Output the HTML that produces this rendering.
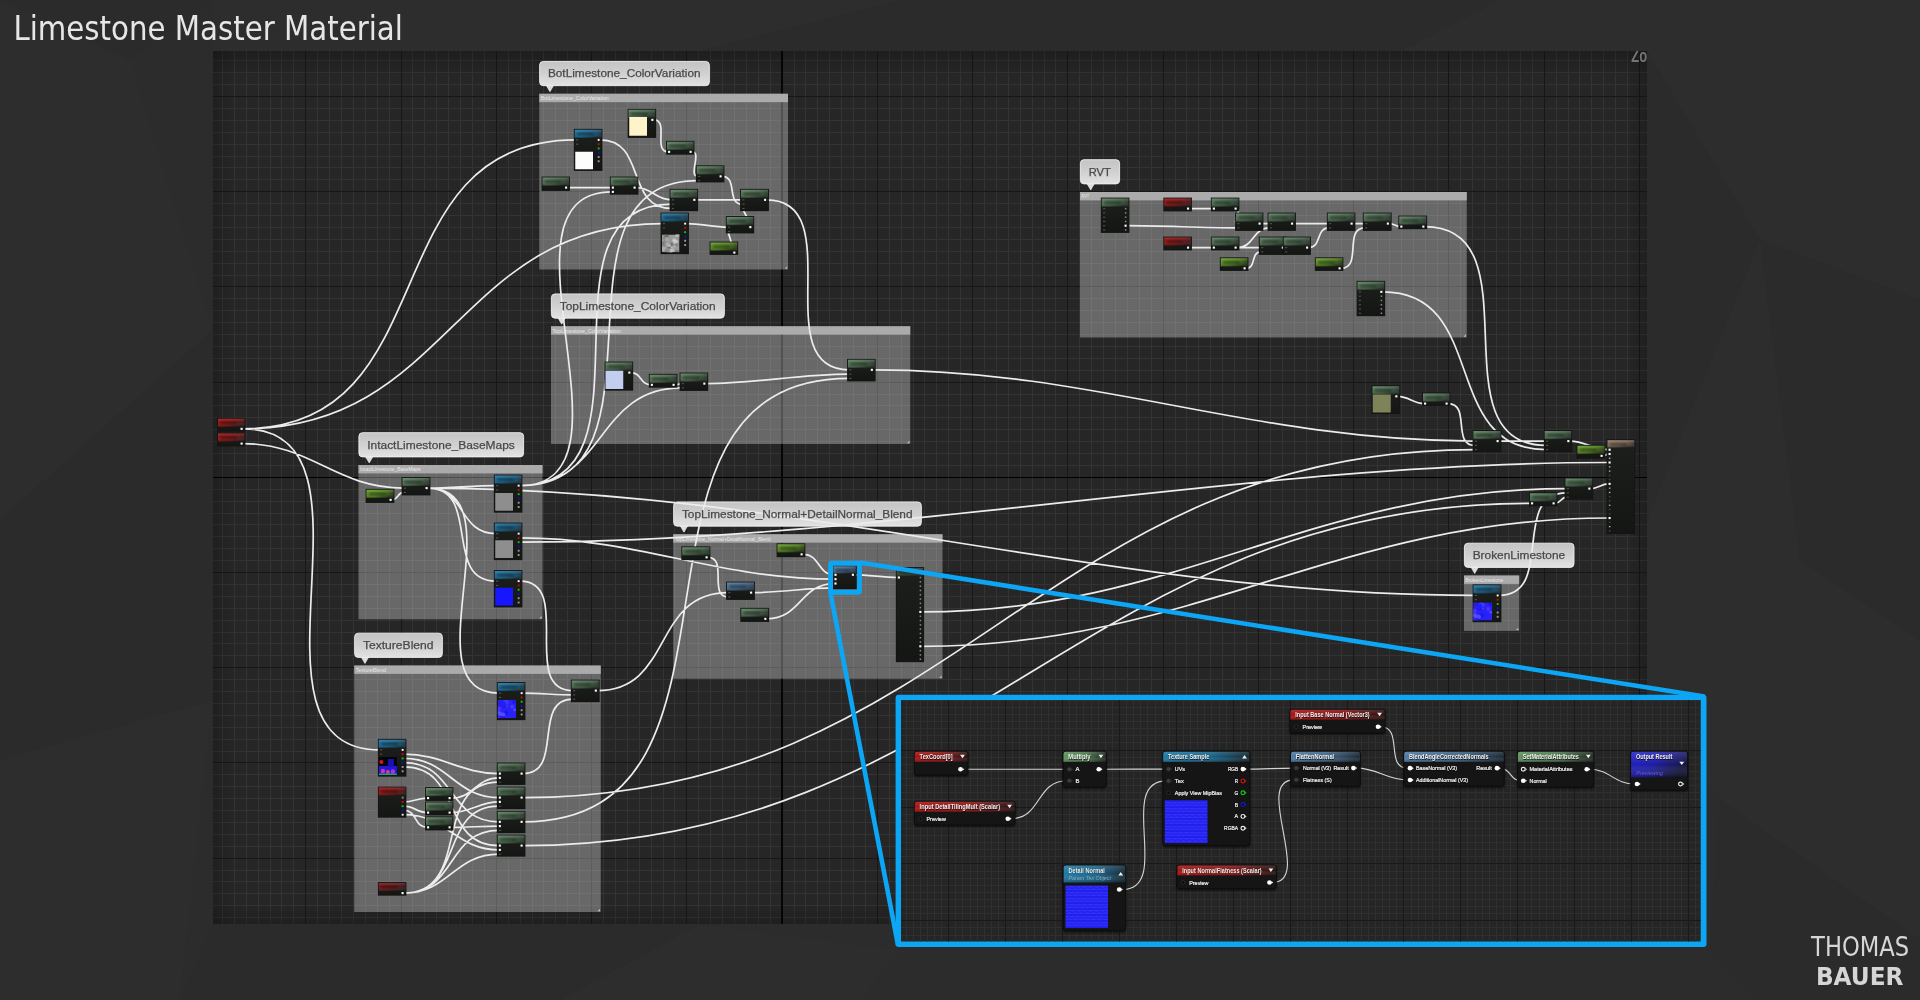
<!DOCTYPE html>
<html lang="en"><head><meta charset="utf-8"><title>Limestone Master Material</title>
<style>html,body{margin:0;padding:0;background:#2c2c2c;overflow:hidden}svg{display:block}</style></head>
<body>
<svg width="1920" height="1000" viewBox="0 0 1920 1000">
<defs>
<linearGradient id="bub" x1="0" y1="0" x2="0" y2="1"><stop offset="0" stop-color="#c4c4c4"/><stop offset="0.5" stop-color="#d0d0d0"/><stop offset="1" stop-color="#e2e2e2"/></linearGradient>
<linearGradient id="hG" x1="0" y1="0" x2="1" y2="0.6"><stop offset="0" stop-color="#587c5a"/><stop offset="0.6" stop-color="#425f45"/><stop offset="1" stop-color="#263328"/></linearGradient>
<linearGradient id="hL" x1="0" y1="0" x2="1" y2="0.6"><stop offset="0" stop-color="#649a2a"/><stop offset="0.6" stop-color="#4c7a1a"/><stop offset="1" stop-color="#263614"/></linearGradient>
<linearGradient id="hR" x1="0" y1="0" x2="1" y2="0.6"><stop offset="0" stop-color="#9a1010"/><stop offset="0.6" stop-color="#7a1111"/><stop offset="1" stop-color="#351717"/></linearGradient>
<linearGradient id="hB" x1="0" y1="0" x2="1" y2="0.6"><stop offset="0" stop-color="#1b74a2"/><stop offset="0.6" stop-color="#165b82"/><stop offset="1" stop-color="#183442"/></linearGradient>
<linearGradient id="hS" x1="0" y1="0" x2="1" y2="0.6"><stop offset="0" stop-color="#4f7699"/><stop offset="0.6" stop-color="#3f6080"/><stop offset="1" stop-color="#28394a"/></linearGradient>
<linearGradient id="hO" x1="0" y1="0" x2="1" y2="0.6"><stop offset="0" stop-color="#8f7663"/><stop offset="0.6" stop-color="#7a6454"/><stop offset="1" stop-color="#3a322c"/></linearGradient>
<linearGradient id="hD" x1="0" y1="0" x2="1" y2="0.6"><stop offset="0" stop-color="#3d4f35"/><stop offset="1" stop-color="#262b24"/></linearGradient>
<linearGradient id="gloss" x1="0" y1="0" x2="0" y2="1"><stop offset="0" stop-color="#fff" stop-opacity="0.12"/><stop offset="0.45" stop-color="#fff" stop-opacity="0.02"/><stop offset="1" stop-color="#000" stop-opacity="0.25"/></linearGradient>
<linearGradient id="body" x1="0" y1="0" x2="0" y2="1"><stop offset="0" stop-color="#1c1f1c"/><stop offset="1" stop-color="#141614"/></linearGradient>
<linearGradient id="vT" x1="0" y1="0" x2="0" y2="1"><stop offset="0" stop-color="#000" stop-opacity="0.22"/><stop offset="1" stop-color="#000" stop-opacity="0"/></linearGradient>
<linearGradient id="vB" x1="0" y1="1" x2="0" y2="0"><stop offset="0" stop-color="#000" stop-opacity="0.18"/><stop offset="1" stop-color="#000" stop-opacity="0"/></linearGradient>
<linearGradient id="vL" x1="0" y1="0" x2="1" y2="0"><stop offset="0" stop-color="#000" stop-opacity="0.18"/><stop offset="1" stop-color="#000" stop-opacity="0"/></linearGradient>
<linearGradient id="vR" x1="1" y1="0" x2="0" y2="0"><stop offset="0" stop-color="#000" stop-opacity="0.18"/><stop offset="1" stop-color="#000" stop-opacity="0"/></linearGradient>
<clipPath id="gridclip"><rect x="213" y="51" width="1434" height="873"/></clipPath>
<clipPath id="insetclip"><rect x="898" y="697" width="806" height="247"/></clipPath>
<filter id="blur1" x="-10%" y="-10%" width="120%" height="120%"><feGaussianBlur stdDeviation="0.8"/></filter>
</defs>
<rect width="1920" height="1000" fill="#2c2c2c"/>
<polygon points="0,0 130,60 0,230" fill="#2d2d2d"/>
<polygon points="130,60 213,0 0,0" fill="#2b2b2b"/>
<polygon points="0,230 130,60 213,330 0,520" fill="#2d2d2d"/>
<polygon points="0,520 213,330 213,700 0,760" fill="#2b2b2b"/>
<polygon points="0,760 213,700 180,1000 0,1000" fill="#2d2d2d"/>
<polygon points="180,1000 213,924 700,924 560,1000" fill="#2b2b2b"/>
<polygon points="560,1000 700,924 900,950 860,1000" fill="#2d2d2d"/>
<polygon points="1647,51 1920,0 1920,300 1760,240" fill="#2d2d2d"/>
<polygon points="1647,51 1760,240 1647,520" fill="#2b2b2b"/>
<polygon points="1760,240 1920,300 1920,640 1800,560" fill="#2b2b2b"/>
<polygon points="1647,520 1760,240 1800,560 1720,800 1647,700" fill="#2d2d2d"/>
<polygon points="1720,800 1800,560 1920,640 1920,940" fill="#2d2d2d"/>
<polygon points="1710,950 1720,800 1920,940 1920,1000 1760,1000" fill="#2b2b2b"/>
<polygon points="213,0 900,0 700,51 213,51" fill="#2d2d2d"/>
<polygon points="900,0 1500,0 1400,51 700,51" fill="#2b2b2b"/>
<polygon points="1500,0 1920,0 1647,51 1400,51" fill="#2d2d2d"/>
<rect x="213" y="51" width="1434" height="873" fill="#262626"/>
<g clip-path="url(#gridclip)" shape-rendering="crispEdges">
<path d="M222.45 51V924M234.36 51V924M246.26 51V924M258.17 51V924M270.08 51V924M281.99 51V924M293.89 51V924M305.80 51V924M317.71 51V924M329.62 51V924M341.52 51V924M353.43 51V924M365.34 51V924M377.25 51V924M389.15 51V924M401.06 51V924M412.97 51V924M424.88 51V924M436.78 51V924M448.69 51V924M460.60 51V924M472.51 51V924M484.41 51V924M496.32 51V924M508.23 51V924M520.14 51V924M532.04 51V924M543.95 51V924M555.86 51V924M567.77 51V924M579.67 51V924M591.58 51V924M603.49 51V924M615.40 51V924M627.30 51V924M639.21 51V924M651.12 51V924M663.03 51V924M674.93 51V924M686.84 51V924M698.75 51V924M710.66 51V924M722.56 51V924M734.47 51V924M746.38 51V924M758.29 51V924M770.19 51V924M782.10 51V924M794.01 51V924M805.92 51V924M817.82 51V924M829.73 51V924M841.64 51V924M853.55 51V924M865.45 51V924M877.36 51V924M889.27 51V924M901.18 51V924M913.08 51V924M924.99 51V924M936.90 51V924M948.81 51V924M960.71 51V924M972.62 51V924M984.53 51V924M996.44 51V924M1008.34 51V924M1020.25 51V924M1032.16 51V924M1044.07 51V924M1055.97 51V924M1067.88 51V924M1079.79 51V924M1091.70 51V924M1103.60 51V924M1115.51 51V924M1127.42 51V924M1139.33 51V924M1151.23 51V924M1163.14 51V924M1175.05 51V924M1186.96 51V924M1198.86 51V924M1210.77 51V924M1222.68 51V924M1234.59 51V924M1246.49 51V924M1258.40 51V924M1270.31 51V924M1282.22 51V924M1294.12 51V924M1306.03 51V924M1317.94 51V924M1329.85 51V924M1341.75 51V924M1353.66 51V924M1365.57 51V924M1377.48 51V924M1389.38 51V924M1401.29 51V924M1413.20 51V924M1425.11 51V924M1437.01 51V924M1448.92 51V924M1460.83 51V924M1472.74 51V924M1484.64 51V924M1496.55 51V924M1508.46 51V924M1520.37 51V924M1532.27 51V924M1544.18 51V924M1556.09 51V924M1568.00 51V924M1579.90 51V924M1591.81 51V924M1603.72 51V924M1615.63 51V924M1627.53 51V924M1639.44 51V924M213 60.80H1647M213 72.70H1647M213 84.60H1647M213 96.50H1647M213 108.40H1647M213 120.30H1647M213 132.20H1647M213 144.10H1647M213 156.00H1647M213 167.90H1647M213 179.80H1647M213 191.70H1647M213 203.60H1647M213 215.50H1647M213 227.40H1647M213 239.30H1647M213 251.20H1647M213 263.10H1647M213 275.00H1647M213 286.90H1647M213 298.80H1647M213 310.70H1647M213 322.60H1647M213 334.50H1647M213 346.40H1647M213 358.30H1647M213 370.20H1647M213 382.10H1647M213 394.00H1647M213 405.90H1647M213 417.80H1647M213 429.70H1647M213 441.60H1647M213 453.50H1647M213 465.40H1647M213 477.30H1647M213 489.20H1647M213 501.10H1647M213 513.00H1647M213 524.90H1647M213 536.80H1647M213 548.70H1647M213 560.60H1647M213 572.50H1647M213 584.40H1647M213 596.30H1647M213 608.20H1647M213 620.10H1647M213 632.00H1647M213 643.90H1647M213 655.80H1647M213 667.70H1647M213 679.60H1647M213 691.50H1647M213 703.40H1647M213 715.30H1647M213 727.20H1647M213 739.10H1647M213 751.00H1647M213 762.90H1647M213 774.80H1647M213 786.70H1647M213 798.60H1647M213 810.50H1647M213 822.40H1647M213 834.30H1647M213 846.20H1647M213 858.10H1647M213 870.00H1647M213 881.90H1647M213 893.80H1647M213 905.70H1647M213 917.60H1647" stroke="#333333" stroke-width="1" fill="none"/>
<path d="M305.80 51V924M401.06 51V924M496.32 51V924M591.58 51V924M686.84 51V924M782.10 51V924M877.36 51V924M972.62 51V924M1067.88 51V924M1163.14 51V924M1258.40 51V924M1353.66 51V924M1448.92 51V924M1544.18 51V924M1639.44 51V924M213 96.50H1647M213 191.70H1647M213 286.90H1647M213 382.10H1647M213 477.30H1647M213 572.50H1647M213 667.70H1647M213 762.90H1647M213 858.10H1647" stroke="#171717" stroke-width="1" fill="none"/>
<path d="M213 477.3H1647" stroke="#000" stroke-width="1.3" fill="none"/>
<path d="M782 51V924" stroke="#050505" stroke-width="2" fill="none"/>
</g>
<rect x="213" y="51" width="1434" height="26" fill="url(#vT)"/>
<rect x="213" y="902" width="1434" height="22" fill="url(#vB)"/>
<rect x="213" y="51" width="22" height="873" fill="url(#vL)"/>
<rect x="1625" y="51" width="22" height="873" fill="url(#vR)"/>
<g clip-path="url(#gridclip)" opacity="0.999"><text transform="translate(1631.3 62.2) scale(0.69 1)" font-family="Liberation Sans, sans-serif" font-size="18.8" font-weight="bold" fill="#747474">Zoom</text></g>
<g>
<rect x="539.25" y="93.75" width="248.75" height="175.75" fill="#fff" fill-opacity="0.305"/>
<rect x="539.25" y="93.75" width="248.75" height="8.4" fill="#ababab"/>
<text x="540.75" y="100.05" font-family="Liberation Sans, sans-serif" font-size="4.6" fill="#fff" fill-opacity="0.75" textLength="68.04" lengthAdjust="spacingAndGlyphs">BotLimestone_ColorVariation</text>
<path d="M787.2 266.3L784.8 268.7H787.2Z" fill="#d8d8d8" fill-opacity="0.8"/>
<rect x="1080" y="192" width="386.75" height="145.5" fill="#fff" fill-opacity="0.305"/>
<rect x="1080" y="192" width="386.75" height="8.4" fill="#ababab"/>
<text x="1081.5" y="198.3" font-family="Liberation Sans, sans-serif" font-size="4.6" fill="#fff" fill-opacity="0.75" textLength="7.56" lengthAdjust="spacingAndGlyphs">RVT</text>
<path d="M1465.95 334.3L1463.55 336.7H1465.95Z" fill="#d8d8d8" fill-opacity="0.8"/>
<rect x="551" y="326.25" width="359.25" height="117.75" fill="#fff" fill-opacity="0.305"/>
<rect x="551" y="326.25" width="359.25" height="8.4" fill="#ababab"/>
<text x="552.5" y="332.55" font-family="Liberation Sans, sans-serif" font-size="4.6" fill="#fff" fill-opacity="0.75" textLength="68.04" lengthAdjust="spacingAndGlyphs">TopLimestone_ColorVariation</text>
<path d="M909.45 440.8L907.05 443.2H909.45Z" fill="#d8d8d8" fill-opacity="0.8"/>
<rect x="358.5" y="465" width="184" height="154.25" fill="#fff" fill-opacity="0.305"/>
<rect x="358.5" y="465" width="184" height="8.4" fill="#ababab"/>
<text x="360" y="471.3" font-family="Liberation Sans, sans-serif" font-size="4.6" fill="#fff" fill-opacity="0.75" textLength="60.48" lengthAdjust="spacingAndGlyphs">IntactLimestone_BaseMaps</text>
<path d="M541.7 616.05L539.3 618.45H541.7Z" fill="#d8d8d8" fill-opacity="0.8"/>
<rect x="673.25" y="534.25" width="269.25" height="144.5" fill="#fff" fill-opacity="0.305"/>
<rect x="673.25" y="534.25" width="269.25" height="8.4" fill="#ababab"/>
<text x="674.75" y="540.55" font-family="Liberation Sans, sans-serif" font-size="4.6" fill="#fff" fill-opacity="0.75" textLength="95.76" lengthAdjust="spacingAndGlyphs">TopLimestone_Normal+DetailNormal_Blend</text>
<path d="M941.7 675.55L939.3 677.95H941.7Z" fill="#d8d8d8" fill-opacity="0.8"/>
<rect x="354.25" y="665.5" width="246.5" height="246.5" fill="#fff" fill-opacity="0.305"/>
<rect x="354.25" y="665.5" width="246.5" height="8.4" fill="#ababab"/>
<text x="355.75" y="671.8" font-family="Liberation Sans, sans-serif" font-size="4.6" fill="#fff" fill-opacity="0.75" textLength="30.24" lengthAdjust="spacingAndGlyphs">TextureBlend</text>
<path d="M599.95 908.8L597.55 911.2H599.95Z" fill="#d8d8d8" fill-opacity="0.8"/>
<rect x="1464" y="575.5" width="55.2" height="55.4" fill="#fff" fill-opacity="0.305"/>
<rect x="1464" y="575.5" width="55.2" height="8.4" fill="#ababab"/>
<text x="1465.5" y="581.8" font-family="Liberation Sans, sans-serif" font-size="4.6" fill="#fff" fill-opacity="0.75" textLength="37.8" lengthAdjust="spacingAndGlyphs">BrokenLimestone</text>
<path d="M1518.4 627.7L1516 630.1H1518.4Z" fill="#d8d8d8" fill-opacity="0.8"/>
</g>
<g>
<path d="M546.35 85.55L549.95 91.65L553.55 85.55Z" fill="#dcdcdc" stroke="#efefef" stroke-width="0.7"/>
<rect x="539.65" y="61.45" width="169.7" height="24.2" rx="3.6" fill="url(#bub)" stroke="#efefef" stroke-width="0.9"/>
<path d="M1087.1 183.8L1090.7 189.9L1094.3 183.8Z" fill="#dcdcdc" stroke="#efefef" stroke-width="0.7"/>
<rect x="1080.4" y="159.7" width="39.2" height="24.2" rx="3.6" fill="url(#bub)" stroke="#efefef" stroke-width="0.9"/>
<path d="M558.1 318.05L561.7 324.15L565.3 318.05Z" fill="#dcdcdc" stroke="#efefef" stroke-width="0.7"/>
<rect x="551.4" y="293.95" width="172.95" height="24.2" rx="3.6" fill="url(#bub)" stroke="#efefef" stroke-width="0.9"/>
<path d="M365.6 456.8L369.2 462.9L372.8 456.8Z" fill="#dcdcdc" stroke="#efefef" stroke-width="0.7"/>
<rect x="358.9" y="432.7" width="164.7" height="24.2" rx="3.6" fill="url(#bub)" stroke="#efefef" stroke-width="0.9"/>
<path d="M680.35 526.05L683.95 532.15L687.55 526.05Z" fill="#dcdcdc" stroke="#efefef" stroke-width="0.7"/>
<rect x="673.65" y="501.95" width="247.7" height="24.2" rx="3.6" fill="url(#bub)" stroke="#efefef" stroke-width="0.9"/>
<path d="M361.35 657.3L364.95 663.4L368.55 657.3Z" fill="#dcdcdc" stroke="#efefef" stroke-width="0.7"/>
<rect x="354.65" y="633.2" width="87.7" height="24.2" rx="3.6" fill="url(#bub)" stroke="#efefef" stroke-width="0.9"/>
<path d="M1471.1 567.3L1474.7 573.4L1478.3 567.3Z" fill="#dcdcdc" stroke="#efefef" stroke-width="0.7"/>
<rect x="1464.4" y="543.2" width="109.6" height="24.2" rx="3.6" fill="url(#bub)" stroke="#efefef" stroke-width="0.9"/>
</g>
<g clip-path="url(#gridclip)"><path d="M243.1 428.85C450.35 428.85 368.6 139.85 575.85 139.85M243.1 428.85C451.35 428.85 454.35 223.6 662.6 223.6M243.1 428.85C395.68 428.85 227.27 749.85 379.85 749.85M243.1 443.6C311.43 443.6 335.27 488.1 403.6 488.1M392.1 499.85C398.43 499.85 397.27 492.37 403.6 492.37M428.1 488.1C451.52 488.1 472.43 485.6 495.85 485.6M428.1 488.1C465.85 488.1 458.1 533.6 495.85 533.6M428.1 488.1C481.68 488.1 442.27 581.1 495.85 581.1M428.1 488.1C520.02 488.1 406.93 693.1 498.85 693.1M520.1 485.6C648.59 485.6 483.36 191.87 611.85 191.87M520.1 485.6C664.43 485.6 527.27 204.12 671.6 204.12M520.1 485.6C681.01 485.6 536.94 180.62 697.85 180.62M520.1 485.6C606.51 485.6 595.19 387.87 681.6 387.87M428.1 488.1C797.2 488.1 1105.5 595.4 1474.6 595.4M520.1 542.14C879.98 542.14 1248.72 462.51 1608.6 462.51M520.1 537.87C638.67 537.87 715.93 579.17 834.5 579.17M520.1 581.1C574.18 581.1 518.77 690.6 572.85 690.6M653.85 119.85C669.27 119.85 652.68 151.85 668.1 151.85M692.1 151.85C702.18 151.85 687.77 176.35 697.85 176.35M722.1 176.35C738.02 176.35 726.18 204.12 742.1 204.12M567.6 187.6C582.35 187.6 597.1 187.6 611.85 187.6M636.1 187.6C652.02 187.6 655.68 199.85 671.6 199.85M600.1 139.85C646.78 139.85 624.92 208.39 671.6 208.39M695.85 199.85C711.27 199.85 726.68 199.85 742.1 199.85M686.6 223.6C701.52 223.6 712.93 227.1 727.85 227.1M766.6 199.85C850.77 199.85 764.93 369.85 849.1 369.85M630.85 372.6C641.6 372.6 640.1 384.85 650.85 384.85M675.1 384.85C677.68 384.85 679.02 383.6 681.6 383.6M705.85 383.6C756.76 383.6 798.19 374.12 849.1 374.12M523.1 821.85C779.59 821.85 592.61 378.39 849.1 378.39M873.35 369.85C1097.52 369.85 1250.43 441.1 1474.6 441.1M1127.1 225.68C1164.5 225.68 1199.7 227.87 1237.1 227.87M1189.6 208.6C1197.35 208.6 1205.1 208.6 1212.85 208.6M1237.1 208.6C1242.1 208.6 1232.1 223.6 1237.1 223.6M1261.1 223.6C1263.93 223.6 1266.77 223.6 1269.6 223.6M1293.6 223.6C1305.35 223.6 1317.1 223.6 1328.85 223.6M1353.1 223.6C1357.02 223.6 1360.93 223.6 1364.85 223.6M1389.35 223.6C1394.02 223.6 1395.68 226.6 1400.35 226.6M1189.6 247.6C1197.35 247.6 1205.1 247.6 1212.85 247.6M1237.1 247.6C1254.51 247.6 1252.19 227.87 1269.6 227.87M1237.1 247.6C1245.02 247.6 1252.93 247.6 1260.85 247.6M1246.1 268.35C1256.51 268.35 1250.44 251.87 1260.85 251.87M1284.35 247.6C1284.52 247.6 1284.68 247.6 1284.85 247.6M1308.6 247.6C1321.93 247.6 1315.52 227.87 1328.85 227.87M1341.1 268.35C1362.51 268.35 1343.44 227.87 1364.85 227.87M1424.85 226.6C1538.11 226.6 1432.59 445.37 1545.85 445.37M1382.85 291.85C1489.78 291.85 1438.92 449.64 1545.85 449.64M1397.85 396.35C1409.02 396.35 1412.93 403.6 1424.1 403.6M1448.1 403.6C1470.86 403.6 1451.84 445.37 1474.6 445.37M1499.1 441.1C1514.68 441.1 1530.27 441.1 1545.85 441.1M1569.85 441.1C1585.63 441.1 1592.82 449.7 1608.6 449.7M1603.1 455.85C1605.56 455.85 1606.14 453.97 1608.6 453.97M1590.85 488.6C1598.35 488.6 1601.1 483.86 1608.6 483.86M1555.1 503.35C1561 503.35 1560.7 497.14 1566.6 497.14M1499.1 595.4C1555.78 595.4 1509.92 492.87 1566.6 492.87M921.85 611.9C1177.87 611.9 1310.58 488.6 1566.6 488.6M921.85 646.3C1193.53 646.3 1336.92 518.02 1608.6 518.02M708.1 557.35C727.94 557.35 708.26 596.87 728.1 596.87M803.1 554.35C820.38 554.35 817.22 574.8 834.5 574.8M752.6 592.6C781.46 592.6 805.64 587.91 834.5 587.91M766.85 618.85C801.17 618.85 800.18 583.54 834.5 583.54M854.4 574.8C869.78 574.8 882.47 577.5 897.85 577.5M523.1 693.1C540.27 693.1 555.68 694.87 572.85 694.87M523.1 773.6C564.5 773.6 531.45 699.14 572.85 699.14M523.1 797.6C956.25 797.6 1041.45 449.64 1474.6 449.64M523.1 845.6C970.52 845.6 1083.68 503.35 1531.1 503.35M597.35 690.6C673.6 690.6 651.85 592.6 728.1 592.6M404.1 754.12C442.18 754.12 460.77 773.6 498.85 773.6M404.1 758.39C448.75 758.39 454.2 797.6 498.85 797.6M404.1 762.66C455.41 762.66 447.54 821.85 498.85 821.85M404.1 766.93C461.91 766.93 441.04 845.6 498.85 845.6M404.1 801.87C413.02 801.87 418.18 798.1 427.1 798.1M404.1 806.14C413.92 806.14 417.28 812.6 427.1 812.6M404.1 810.41C417.41 810.41 413.79 827.35 427.1 827.35M404.1 814.68C447.41 814.68 455.54 849.87 498.85 849.87M451.1 798.1C473.76 798.1 476.19 777.87 498.85 777.87M451.1 812.6C470.59 812.6 479.36 801.87 498.85 801.87M451.1 827.35C467.43 827.35 482.52 826.12 498.85 826.12M404.1 893.1C472.67 893.1 430.28 782.14 498.85 782.14M404.1 893.1C464.67 893.1 438.28 806.14 498.85 806.14M404.1 893.1C456.59 893.1 446.36 830.39 498.85 830.39M404.1 893.1C448.67 893.1 454.28 854.14 498.85 854.14M751.5 226.5L742.5 208.5M734.2 252.2L728 231.5" fill="none" stroke="#ececec" stroke-width="1.7" stroke-linecap="round"/></g>
<g clip-path="url(#gridclip)">
<rect x="627.6" y="108.85" width="28.55" height="29.05" fill="#121312"/><rect x="628.4" y="109.65" width="26.95" height="27.45" fill="url(#body)"/><rect x="628.5" y="109.75" width="26.75" height="8.1" fill="url(#hG)"/><rect x="628.5" y="109.75" width="26.75" height="8.1" fill="url(#gloss)"/><rect x="630.5" y="112.45" width="17.2" height="3" rx="1.5" fill="#000" fill-opacity="0.36" filter="url(#blur1)"/><rect x="629.25" y="117" width="17.75" height="18.75" fill="#fff3cc"/><rect x="651.3" y="118.8" width="2.1" height="2.1" fill="#fff"/>
<rect x="573.85" y="128.85" width="28.55" height="42.05" fill="#121312"/><rect x="574.65" y="129.65" width="26.95" height="40.45" fill="url(#body)"/><rect x="574.75" y="129.75" width="26.75" height="8.1" fill="url(#hB)"/><rect x="574.75" y="129.75" width="26.75" height="8.1" fill="url(#gloss)"/><rect x="576.75" y="132.45" width="17.2" height="3" rx="1.5" fill="#000" fill-opacity="0.36" filter="url(#blur1)"/><rect x="575.25" y="151.75" width="17.75" height="17.5" fill="#fdfdfd"/><rect x="597.7" y="138.95" width="1.9" height="1.9" fill="#fff"/><rect x="597.7" y="143.22" width="1.9" height="1.9" fill="#e00000"/><rect x="597.7" y="147.49" width="1.9" height="1.9" fill="#00d000"/><rect x="597.7" y="151.76" width="1.9" height="1.9" fill="#1010e0"/><rect x="597.7" y="156.03" width="1.9" height="1.9" fill="#999"/><rect x="597.7" y="160.3" width="1.9" height="1.9" fill="#999"/><rect x="576.05" y="139.35" width="2.2" height="1.1" fill="#50544f"/><rect x="576.05" y="143.62" width="2.2" height="1.1" fill="#50544f"/>
<rect x="666.1" y="140.85" width="28.3" height="13.8" fill="#121312"/><rect x="666.9" y="141.65" width="26.7" height="12.2" fill="url(#body)"/><rect x="667" y="141.75" width="26.5" height="8.1" fill="url(#hG)"/><rect x="667" y="141.75" width="26.5" height="8.1" fill="url(#gloss)"/><rect x="669" y="144.45" width="17.05" height="3" rx="1.5" fill="#000" fill-opacity="0.36" filter="url(#blur1)"/><rect x="689.55" y="150.8" width="2.1" height="2.1" fill="#fff"/><rect x="668.05" y="150.8" width="2.1" height="2.1" fill="#fff"/>
<rect x="695.85" y="165.35" width="28.55" height="17.05" fill="#121312"/><rect x="696.65" y="166.15" width="26.95" height="15.45" fill="url(#body)"/><rect x="696.75" y="166.25" width="26.75" height="8.1" fill="url(#hG)"/><rect x="696.75" y="166.25" width="26.75" height="8.1" fill="url(#gloss)"/><rect x="698.75" y="168.95" width="17.2" height="3" rx="1.5" fill="#000" fill-opacity="0.36" filter="url(#blur1)"/><rect x="719.55" y="175.3" width="2.1" height="2.1" fill="#fff"/><rect x="698.05" y="175.85" width="2.2" height="1.1" fill="#50544f"/><rect x="698.05" y="180.12" width="2.2" height="1.1" fill="#50544f"/>
<rect x="541.6" y="176.6" width="28.3" height="14.3" fill="#121312"/><rect x="542.4" y="177.4" width="26.7" height="12.7" fill="url(#body)"/><rect x="542.5" y="177.5" width="26.5" height="8.1" fill="url(#hG)"/><rect x="542.5" y="177.5" width="26.5" height="8.1" fill="url(#gloss)"/><rect x="544.5" y="180.2" width="17.05" height="3" rx="1.5" fill="#000" fill-opacity="0.36" filter="url(#blur1)"/><rect x="565.05" y="186.55" width="2.1" height="2.1" fill="#fff"/>
<rect x="609.85" y="176.6" width="28.55" height="18.05" fill="#121312"/><rect x="610.65" y="177.4" width="26.95" height="16.45" fill="url(#body)"/><rect x="610.75" y="177.5" width="26.75" height="8.1" fill="url(#hG)"/><rect x="610.75" y="177.5" width="26.75" height="8.1" fill="url(#gloss)"/><rect x="612.75" y="180.2" width="17.2" height="3" rx="1.5" fill="#000" fill-opacity="0.36" filter="url(#blur1)"/><rect x="633.55" y="186.55" width="2.1" height="2.1" fill="#fff"/><rect x="611.8" y="186.55" width="2.1" height="2.1" fill="#fff"/><rect x="611.8" y="190.82" width="2.1" height="2.1" fill="#fff"/>
<rect x="669.6" y="188.85" width="28.55" height="22.3" fill="#121312"/><rect x="670.4" y="189.65" width="26.95" height="20.7" fill="url(#body)"/><rect x="670.5" y="189.75" width="26.75" height="8.1" fill="url(#hG)"/><rect x="670.5" y="189.75" width="26.75" height="8.1" fill="url(#gloss)"/><rect x="672.5" y="192.45" width="17.2" height="3" rx="1.5" fill="#000" fill-opacity="0.36" filter="url(#blur1)"/><rect x="693.3" y="198.8" width="2.1" height="2.1" fill="#fff"/><rect x="671.8" y="199.35" width="2.2" height="1.1" fill="#50544f"/><rect x="671.8" y="203.62" width="2.2" height="1.1" fill="#50544f"/><rect x="671.8" y="207.89" width="2.2" height="1.1" fill="#50544f"/>
<rect x="740.1" y="188.85" width="28.8" height="22.3" fill="#121312"/><rect x="740.9" y="189.65" width="27.2" height="20.7" fill="url(#body)"/><rect x="741" y="189.75" width="27" height="8.1" fill="url(#hG)"/><rect x="741" y="189.75" width="27" height="8.1" fill="url(#gloss)"/><rect x="743" y="192.45" width="17.36" height="3" rx="1.5" fill="#000" fill-opacity="0.36" filter="url(#blur1)"/><rect x="764.05" y="198.8" width="2.1" height="2.1" fill="#fff"/><rect x="742.3" y="199.35" width="2.2" height="1.1" fill="#50544f"/><rect x="742.3" y="203.62" width="2.2" height="1.1" fill="#50544f"/><rect x="742.3" y="207.89" width="2.2" height="1.1" fill="#50544f"/>
<rect x="660.6" y="212.6" width="28.3" height="41.55" fill="#121312"/><rect x="661.4" y="213.4" width="26.7" height="39.95" fill="url(#body)"/><rect x="661.5" y="213.5" width="26.5" height="8.1" fill="url(#hB)"/><rect x="661.5" y="213.5" width="26.5" height="8.1" fill="url(#gloss)"/><rect x="663.5" y="216.2" width="17.05" height="3" rx="1.5" fill="#000" fill-opacity="0.36" filter="url(#blur1)"/><svg x="662" y="234.5" width="17.5" height="17.75" viewBox="662 234.5 17.5 17.75"><rect x="662" y="234.5" width="17.5" height="17.75" fill="#9a9a9a"/><circle cx="666.16" cy="244.16" r="1.61" fill="#d6d6d6" fill-opacity="0.7"/><circle cx="670.3" cy="244.81" r="2.13" fill="#808080" fill-opacity="0.7"/><circle cx="666.54" cy="238.66" r="2.99" fill="#808080" fill-opacity="0.7"/><circle cx="671.47" cy="244.26" r="1.67" fill="#6e6e6e" fill-opacity="0.7"/><circle cx="666.06" cy="237.19" r="2.84" fill="#808080" fill-opacity="0.7"/><circle cx="674.97" cy="246.42" r="0.94" fill="#d6d6d6" fill-opacity="0.7"/><circle cx="662.75" cy="248.35" r="2.61" fill="#b4b4b4" fill-opacity="0.7"/><circle cx="670.27" cy="247.26" r="2.73" fill="#5c5c5c" fill-opacity="0.7"/><circle cx="675.79" cy="242.08" r="2.4" fill="#d6d6d6" fill-opacity="0.7"/><circle cx="669.78" cy="251.11" r="2.73" fill="#c8c8c8" fill-opacity="0.7"/><circle cx="662.63" cy="243.28" r="1.37" fill="#5c5c5c" fill-opacity="0.7"/><circle cx="669.63" cy="245.62" r="1.46" fill="#d6d6d6" fill-opacity="0.7"/><circle cx="676.59" cy="244.69" r="1.98" fill="#808080" fill-opacity="0.7"/><circle cx="672.22" cy="250.55" r="2.3" fill="#c8c8c8" fill-opacity="0.7"/><circle cx="676.99" cy="252.09" r="2.28" fill="#6e6e6e" fill-opacity="0.7"/><circle cx="674.23" cy="240.29" r="1.99" fill="#d6d6d6" fill-opacity="0.7"/><circle cx="671.96" cy="247.17" r="1.26" fill="#d6d6d6" fill-opacity="0.7"/><circle cx="666.67" cy="236.71" r="1.86" fill="#5c5c5c" fill-opacity="0.7"/><circle cx="679.32" cy="236.07" r="2.56" fill="#808080" fill-opacity="0.7"/><circle cx="677.7" cy="234.86" r="1.74" fill="#808080" fill-opacity="0.7"/><circle cx="677.27" cy="235.28" r="2.15" fill="#c8c8c8" fill-opacity="0.7"/><circle cx="668.61" cy="244.91" r="2.01" fill="#b4b4b4" fill-opacity="0.7"/><circle cx="670.84" cy="252.22" r="1.48" fill="#c8c8c8" fill-opacity="0.7"/><circle cx="663.89" cy="244.01" r="2.89" fill="#808080" fill-opacity="0.7"/><circle cx="667.1" cy="239.17" r="2.32" fill="#b4b4b4" fill-opacity="0.7"/><circle cx="667.49" cy="251.52" r="2.77" fill="#808080" fill-opacity="0.7"/></svg><rect x="684.2" y="222.7" width="1.9" height="1.9" fill="#fff"/><rect x="684.2" y="226.97" width="1.9" height="1.9" fill="#e00000"/><rect x="684.2" y="231.24" width="1.9" height="1.9" fill="#00d000"/><rect x="684.2" y="235.51" width="1.9" height="1.9" fill="#1010e0"/><rect x="684.2" y="239.78" width="1.9" height="1.9" fill="#999"/><rect x="684.2" y="244.05" width="1.9" height="1.9" fill="#999"/><rect x="662.8" y="223.1" width="2.2" height="1.1" fill="#50544f"/><rect x="662.8" y="227.37" width="2.2" height="1.1" fill="#50544f"/>
<rect x="725.85" y="216.1" width="28.3" height="17.3" fill="#121312"/><rect x="726.65" y="216.9" width="26.7" height="15.7" fill="url(#body)"/><rect x="726.75" y="217" width="26.5" height="8.1" fill="url(#hG)"/><rect x="726.75" y="217" width="26.5" height="8.1" fill="url(#gloss)"/><rect x="728.75" y="219.7" width="17.05" height="3" rx="1.5" fill="#000" fill-opacity="0.36" filter="url(#blur1)"/><rect x="749.3" y="226.05" width="2.1" height="2.1" fill="#fff"/><rect x="728.05" y="226.6" width="2.2" height="1.1" fill="#50544f"/><rect x="728.05" y="230.87" width="2.2" height="1.1" fill="#50544f"/>
<rect x="709.6" y="241.6" width="28.55" height="13.3" fill="#121312"/><rect x="710.4" y="242.4" width="26.95" height="11.7" fill="url(#body)"/><rect x="710.5" y="242.5" width="26.75" height="8.1" fill="url(#hL)"/><rect x="710.5" y="242.5" width="26.75" height="8.1" fill="url(#gloss)"/><rect x="712.5" y="245.2" width="17.2" height="3" rx="1.5" fill="#000" fill-opacity="0.36" filter="url(#blur1)"/><rect x="733.3" y="251.55" width="2.1" height="2.1" fill="#fff"/>
<rect x="1100.85" y="197.6" width="28.55" height="35.3" fill="#121312"/><rect x="1101.65" y="198.4" width="26.95" height="33.7" fill="url(#body)"/><rect x="1101.75" y="198.5" width="26.75" height="8.1" fill="url(#hG)"/><rect x="1101.75" y="198.5" width="26.75" height="8.1" fill="url(#gloss)"/><rect x="1103.75" y="201.2" width="17.2" height="3" rx="1.5" fill="#000" fill-opacity="0.36" filter="url(#blur1)"/><rect x="1124.9" y="207.9" width="1.5" height="1.5" fill="#8a8a8a"/><rect x="1124.9" y="212.17" width="1.5" height="1.5" fill="#8a8a8a"/><rect x="1124.9" y="216.44" width="1.5" height="1.5" fill="#8a8a8a"/><rect x="1124.9" y="220.71" width="1.5" height="1.5" fill="#8a8a8a"/><rect x="1124.55" y="224.63" width="2.1" height="2.1" fill="#fff"/><rect x="1124.9" y="229.25" width="1.5" height="1.5" fill="#8a8a8a"/><rect x="1103.05" y="208.1" width="2.2" height="1.1" fill="#50544f"/><rect x="1103.05" y="212.37" width="2.2" height="1.1" fill="#50544f"/><rect x="1103.05" y="216.64" width="2.2" height="1.1" fill="#50544f"/><rect x="1103.05" y="220.91" width="2.2" height="1.1" fill="#50544f"/><rect x="1103.05" y="225.18" width="2.2" height="1.1" fill="#50544f"/><rect x="1103.05" y="229.45" width="2.2" height="1.1" fill="#50544f"/>
<rect x="1163.35" y="197.6" width="28.55" height="13.8" fill="#121312"/><rect x="1164.15" y="198.4" width="26.95" height="12.2" fill="url(#body)"/><rect x="1164.25" y="198.5" width="26.75" height="8.1" fill="url(#hR)"/><rect x="1164.25" y="198.5" width="26.75" height="8.1" fill="url(#gloss)"/><rect x="1166.25" y="201.2" width="17.2" height="3" rx="1.5" fill="#000" fill-opacity="0.36" filter="url(#blur1)"/><rect x="1187.05" y="207.55" width="2.1" height="2.1" fill="#fff"/>
<rect x="1210.85" y="197.6" width="28.55" height="13.8" fill="#121312"/><rect x="1211.65" y="198.4" width="26.95" height="12.2" fill="url(#body)"/><rect x="1211.75" y="198.5" width="26.75" height="8.1" fill="url(#hG)"/><rect x="1211.75" y="198.5" width="26.75" height="8.1" fill="url(#gloss)"/><rect x="1213.75" y="201.2" width="17.2" height="3" rx="1.5" fill="#000" fill-opacity="0.36" filter="url(#blur1)"/><rect x="1234.55" y="207.55" width="2.1" height="2.1" fill="#fff"/><rect x="1212.8" y="207.55" width="2.1" height="2.1" fill="#fff"/>
<rect x="1235.1" y="212.6" width="28.3" height="18.3" fill="#121312"/><rect x="1235.9" y="213.4" width="26.7" height="16.7" fill="url(#body)"/><rect x="1236" y="213.5" width="26.5" height="8.1" fill="url(#hG)"/><rect x="1236" y="213.5" width="26.5" height="8.1" fill="url(#gloss)"/><rect x="1238" y="216.2" width="17.05" height="3" rx="1.5" fill="#000" fill-opacity="0.36" filter="url(#blur1)"/><rect x="1258.55" y="222.55" width="2.1" height="2.1" fill="#fff"/><rect x="1237.3" y="223.1" width="2.2" height="1.1" fill="#50544f"/><rect x="1237.3" y="227.37" width="2.2" height="1.1" fill="#50544f"/>
<rect x="1267.6" y="212.6" width="28.3" height="18.3" fill="#121312"/><rect x="1268.4" y="213.4" width="26.7" height="16.7" fill="url(#body)"/><rect x="1268.5" y="213.5" width="26.5" height="8.1" fill="url(#hG)"/><rect x="1268.5" y="213.5" width="26.5" height="8.1" fill="url(#gloss)"/><rect x="1270.5" y="216.2" width="17.05" height="3" rx="1.5" fill="#000" fill-opacity="0.36" filter="url(#blur1)"/><rect x="1291.05" y="222.55" width="2.1" height="2.1" fill="#fff"/><rect x="1269.8" y="223.1" width="2.2" height="1.1" fill="#50544f"/><rect x="1269.8" y="227.37" width="2.2" height="1.1" fill="#50544f"/>
<rect x="1326.85" y="212.6" width="28.55" height="18.3" fill="#121312"/><rect x="1327.65" y="213.4" width="26.95" height="16.7" fill="url(#body)"/><rect x="1327.75" y="213.5" width="26.75" height="8.1" fill="url(#hG)"/><rect x="1327.75" y="213.5" width="26.75" height="8.1" fill="url(#gloss)"/><rect x="1329.75" y="216.2" width="17.2" height="3" rx="1.5" fill="#000" fill-opacity="0.36" filter="url(#blur1)"/><rect x="1350.55" y="222.55" width="2.1" height="2.1" fill="#fff"/><rect x="1329.05" y="223.1" width="2.2" height="1.1" fill="#50544f"/><rect x="1329.05" y="227.37" width="2.2" height="1.1" fill="#50544f"/>
<rect x="1362.85" y="212.6" width="28.8" height="18.3" fill="#121312"/><rect x="1363.65" y="213.4" width="27.2" height="16.7" fill="url(#body)"/><rect x="1363.75" y="213.5" width="27" height="8.1" fill="url(#hG)"/><rect x="1363.75" y="213.5" width="27" height="8.1" fill="url(#gloss)"/><rect x="1365.75" y="216.2" width="17.36" height="3" rx="1.5" fill="#000" fill-opacity="0.36" filter="url(#blur1)"/><rect x="1386.8" y="222.55" width="2.1" height="2.1" fill="#fff"/><rect x="1365.05" y="223.1" width="2.2" height="1.1" fill="#50544f"/><rect x="1365.05" y="227.37" width="2.2" height="1.1" fill="#50544f"/>
<rect x="1398.35" y="215.6" width="28.8" height="13.55" fill="#121312"/><rect x="1399.15" y="216.4" width="27.2" height="11.95" fill="url(#body)"/><rect x="1399.25" y="216.5" width="27" height="8.1" fill="url(#hG)"/><rect x="1399.25" y="216.5" width="27" height="8.1" fill="url(#gloss)"/><rect x="1401.25" y="219.2" width="17.36" height="3" rx="1.5" fill="#000" fill-opacity="0.36" filter="url(#blur1)"/><rect x="1422.3" y="225.55" width="2.1" height="2.1" fill="#fff"/><rect x="1400.3" y="225.55" width="2.1" height="2.1" fill="#fff"/>
<rect x="1163.35" y="236.6" width="28.55" height="13.8" fill="#121312"/><rect x="1164.15" y="237.4" width="26.95" height="12.2" fill="url(#body)"/><rect x="1164.25" y="237.5" width="26.75" height="8.1" fill="url(#hR)"/><rect x="1164.25" y="237.5" width="26.75" height="8.1" fill="url(#gloss)"/><rect x="1166.25" y="240.2" width="17.2" height="3" rx="1.5" fill="#000" fill-opacity="0.36" filter="url(#blur1)"/><rect x="1187.05" y="246.55" width="2.1" height="2.1" fill="#fff"/>
<rect x="1210.85" y="236.6" width="28.55" height="13.8" fill="#121312"/><rect x="1211.65" y="237.4" width="26.95" height="12.2" fill="url(#body)"/><rect x="1211.75" y="237.5" width="26.75" height="8.1" fill="url(#hG)"/><rect x="1211.75" y="237.5" width="26.75" height="8.1" fill="url(#gloss)"/><rect x="1213.75" y="240.2" width="17.2" height="3" rx="1.5" fill="#000" fill-opacity="0.36" filter="url(#blur1)"/><rect x="1234.55" y="246.55" width="2.1" height="2.1" fill="#fff"/><rect x="1212.8" y="246.55" width="2.1" height="2.1" fill="#fff"/>
<rect x="1258.85" y="236.6" width="27.8" height="18.3" fill="#121312"/><rect x="1259.65" y="237.4" width="26.2" height="16.7" fill="url(#body)"/><rect x="1259.75" y="237.5" width="26" height="8.1" fill="url(#hG)"/><rect x="1259.75" y="237.5" width="26" height="8.1" fill="url(#gloss)"/><rect x="1261.75" y="240.2" width="16.74" height="3" rx="1.5" fill="#000" fill-opacity="0.36" filter="url(#blur1)"/><rect x="1281.8" y="246.55" width="2.1" height="2.1" fill="#fff"/><rect x="1261.05" y="247.1" width="2.2" height="1.1" fill="#50544f"/><rect x="1261.05" y="251.37" width="2.2" height="1.1" fill="#50544f"/>
<rect x="1282.85" y="236.6" width="28.05" height="18.3" fill="#121312"/><rect x="1283.65" y="237.4" width="26.45" height="16.7" fill="url(#body)"/><rect x="1283.75" y="237.5" width="26.25" height="8.1" fill="url(#hG)"/><rect x="1283.75" y="237.5" width="26.25" height="8.1" fill="url(#gloss)"/><rect x="1285.75" y="240.2" width="16.89" height="3" rx="1.5" fill="#000" fill-opacity="0.36" filter="url(#blur1)"/><rect x="1306.05" y="246.55" width="2.1" height="2.1" fill="#fff"/><rect x="1285.05" y="247.1" width="2.2" height="1.1" fill="#50544f"/><rect x="1285.05" y="251.37" width="2.2" height="1.1" fill="#50544f"/>
<rect x="1219.85" y="257.35" width="28.55" height="13.55" fill="#121312"/><rect x="1220.65" y="258.15" width="26.95" height="11.95" fill="url(#body)"/><rect x="1220.75" y="258.25" width="26.75" height="8.1" fill="url(#hL)"/><rect x="1220.75" y="258.25" width="26.75" height="8.1" fill="url(#gloss)"/><rect x="1222.75" y="260.95" width="17.2" height="3" rx="1.5" fill="#000" fill-opacity="0.36" filter="url(#blur1)"/><rect x="1243.55" y="267.3" width="2.1" height="2.1" fill="#fff"/>
<rect x="1314.85" y="257.35" width="28.55" height="13.55" fill="#121312"/><rect x="1315.65" y="258.15" width="26.95" height="11.95" fill="url(#body)"/><rect x="1315.75" y="258.25" width="26.75" height="8.1" fill="url(#hL)"/><rect x="1315.75" y="258.25" width="26.75" height="8.1" fill="url(#gloss)"/><rect x="1317.75" y="260.95" width="17.2" height="3" rx="1.5" fill="#000" fill-opacity="0.36" filter="url(#blur1)"/><rect x="1338.55" y="267.3" width="2.1" height="2.1" fill="#fff"/>
<rect x="1356.6" y="280.85" width="28.55" height="35.3" fill="#121312"/><rect x="1357.4" y="281.65" width="26.95" height="33.7" fill="url(#body)"/><rect x="1357.5" y="281.75" width="26.75" height="8.1" fill="url(#hG)"/><rect x="1357.5" y="281.75" width="26.75" height="8.1" fill="url(#gloss)"/><rect x="1359.5" y="284.45" width="17.2" height="3" rx="1.5" fill="#000" fill-opacity="0.36" filter="url(#blur1)"/><rect x="1380.3" y="290.8" width="2.1" height="2.1" fill="#fff"/><rect x="1380.65" y="295.42" width="1.5" height="1.5" fill="#8a8a8a"/><rect x="1380.65" y="299.69" width="1.5" height="1.5" fill="#8a8a8a"/><rect x="1380.65" y="303.96" width="1.5" height="1.5" fill="#8a8a8a"/><rect x="1380.65" y="308.23" width="1.5" height="1.5" fill="#8a8a8a"/><rect x="1380.65" y="312.5" width="1.5" height="1.5" fill="#8a8a8a"/><rect x="1358.8" y="291.35" width="2.2" height="1.1" fill="#50544f"/><rect x="1358.8" y="295.62" width="2.2" height="1.1" fill="#50544f"/><rect x="1358.8" y="299.89" width="2.2" height="1.1" fill="#50544f"/><rect x="1358.8" y="304.16" width="2.2" height="1.1" fill="#50544f"/><rect x="1358.8" y="308.43" width="2.2" height="1.1" fill="#50544f"/><rect x="1358.8" y="312.7" width="2.2" height="1.1" fill="#50544f"/>
<rect x="604.6" y="361.6" width="28.55" height="29.05" fill="#121312"/><rect x="605.4" y="362.4" width="26.95" height="27.45" fill="url(#body)"/><rect x="605.5" y="362.5" width="26.75" height="8.1" fill="url(#hG)"/><rect x="605.5" y="362.5" width="26.75" height="8.1" fill="url(#gloss)"/><rect x="607.5" y="365.2" width="17.2" height="3" rx="1.5" fill="#000" fill-opacity="0.36" filter="url(#blur1)"/><rect x="605.5" y="370.75" width="17.75" height="18.25" fill="#c3cdf0"/><rect x="628.3" y="371.55" width="2.1" height="2.1" fill="#fff"/>
<rect x="648.85" y="373.85" width="28.55" height="13.8" fill="#121312"/><rect x="649.65" y="374.65" width="26.95" height="12.2" fill="url(#body)"/><rect x="649.75" y="374.75" width="26.75" height="8.1" fill="url(#hG)"/><rect x="649.75" y="374.75" width="26.75" height="8.1" fill="url(#gloss)"/><rect x="651.75" y="377.45" width="17.2" height="3" rx="1.5" fill="#000" fill-opacity="0.36" filter="url(#blur1)"/><rect x="672.55" y="383.8" width="2.1" height="2.1" fill="#fff"/><rect x="650.8" y="383.8" width="2.1" height="2.1" fill="#fff"/>
<rect x="679.6" y="372.6" width="28.55" height="18.3" fill="#121312"/><rect x="680.4" y="373.4" width="26.95" height="16.7" fill="url(#body)"/><rect x="680.5" y="373.5" width="26.75" height="8.1" fill="url(#hG)"/><rect x="680.5" y="373.5" width="26.75" height="8.1" fill="url(#gloss)"/><rect x="682.5" y="376.2" width="17.2" height="3" rx="1.5" fill="#000" fill-opacity="0.36" filter="url(#blur1)"/><rect x="703.3" y="382.55" width="2.1" height="2.1" fill="#fff"/><rect x="681.8" y="383.1" width="2.2" height="1.1" fill="#50544f"/><rect x="681.8" y="387.37" width="2.2" height="1.1" fill="#50544f"/>
<rect x="847.1" y="358.85" width="28.55" height="22.55" fill="#121312"/><rect x="847.9" y="359.65" width="26.95" height="20.95" fill="url(#body)"/><rect x="848" y="359.75" width="26.75" height="8.1" fill="url(#hG)"/><rect x="848" y="359.75" width="26.75" height="8.1" fill="url(#gloss)"/><rect x="850" y="362.45" width="17.2" height="3" rx="1.5" fill="#000" fill-opacity="0.36" filter="url(#blur1)"/><rect x="870.8" y="368.8" width="2.1" height="2.1" fill="#fff"/><rect x="849.3" y="369.35" width="2.2" height="1.1" fill="#50544f"/><rect x="849.3" y="373.62" width="2.2" height="1.1" fill="#50544f"/><rect x="849.3" y="377.89" width="2.2" height="1.1" fill="#50544f"/>
<rect x="217.1" y="417.85" width="28.3" height="13.8" fill="#121312"/><rect x="217.9" y="418.65" width="26.7" height="12.2" fill="url(#body)"/><rect x="218" y="418.75" width="26.5" height="8.1" fill="url(#hR)"/><rect x="218" y="418.75" width="26.5" height="8.1" fill="url(#gloss)"/><rect x="220" y="421.45" width="17.05" height="3" rx="1.5" fill="#000" fill-opacity="0.36" filter="url(#blur1)"/><rect x="240.55" y="427.8" width="2.1" height="2.1" fill="#fff"/>
<rect x="217.1" y="432.6" width="28.3" height="13.8" fill="#121312"/><rect x="217.9" y="433.4" width="26.7" height="12.2" fill="url(#body)"/><rect x="218" y="433.5" width="26.5" height="8.1" fill="url(#hR)"/><rect x="218" y="433.5" width="26.5" height="8.1" fill="url(#gloss)"/><rect x="220" y="436.2" width="17.05" height="3" rx="1.5" fill="#000" fill-opacity="0.36" filter="url(#blur1)"/><rect x="240.55" y="442.55" width="2.1" height="2.1" fill="#fff"/>
<rect x="365.6" y="488.85" width="28.8" height="14.05" fill="#121312"/><rect x="366.4" y="489.65" width="27.2" height="12.45" fill="url(#body)"/><rect x="366.5" y="489.75" width="27" height="8.1" fill="url(#hL)"/><rect x="366.5" y="489.75" width="27" height="8.1" fill="url(#gloss)"/><rect x="368.5" y="492.45" width="17.36" height="3" rx="1.5" fill="#000" fill-opacity="0.36" filter="url(#blur1)"/><rect x="389.55" y="498.8" width="2.1" height="2.1" fill="#fff"/>
<rect x="401.6" y="477.1" width="28.8" height="18.3" fill="#121312"/><rect x="402.4" y="477.9" width="27.2" height="16.7" fill="url(#body)"/><rect x="402.5" y="478" width="27" height="8.1" fill="url(#hG)"/><rect x="402.5" y="478" width="27" height="8.1" fill="url(#gloss)"/><rect x="404.5" y="480.7" width="17.36" height="3" rx="1.5" fill="#000" fill-opacity="0.36" filter="url(#blur1)"/><rect x="425.55" y="487.05" width="2.1" height="2.1" fill="#fff"/><rect x="403.8" y="487.6" width="2.2" height="1.1" fill="#50544f"/><rect x="403.8" y="491.87" width="2.2" height="1.1" fill="#50544f"/>
<rect x="493.85" y="474.6" width="28.55" height="38.05" fill="#121312"/><rect x="494.65" y="475.4" width="26.95" height="36.45" fill="url(#body)"/><rect x="494.75" y="475.5" width="26.75" height="8.1" fill="url(#hB)"/><rect x="494.75" y="475.5" width="26.75" height="8.1" fill="url(#gloss)"/><rect x="496.75" y="478.2" width="17.2" height="3" rx="1.5" fill="#000" fill-opacity="0.36" filter="url(#blur1)"/><rect x="495.25" y="493" width="17.75" height="17.75" fill="#8e8e8e"/><rect x="517.7" y="484.7" width="1.9" height="1.9" fill="#fff"/><rect x="517.7" y="488.97" width="1.9" height="1.9" fill="#e00000"/><rect x="517.7" y="493.24" width="1.9" height="1.9" fill="#00d000"/><rect x="517.7" y="497.51" width="1.9" height="1.9" fill="#1010e0"/><rect x="517.7" y="501.78" width="1.9" height="1.9" fill="#999"/><rect x="517.7" y="506.05" width="1.9" height="1.9" fill="#999"/><rect x="496.05" y="485.1" width="2.2" height="1.1" fill="#50544f"/><rect x="496.05" y="489.37" width="2.2" height="1.1" fill="#50544f"/>
<rect x="493.85" y="522.6" width="28.55" height="37.55" fill="#121312"/><rect x="494.65" y="523.4" width="26.95" height="35.95" fill="url(#body)"/><rect x="494.75" y="523.5" width="26.75" height="8.1" fill="url(#hB)"/><rect x="494.75" y="523.5" width="26.75" height="8.1" fill="url(#gloss)"/><rect x="496.75" y="526.2" width="17.2" height="3" rx="1.5" fill="#000" fill-opacity="0.36" filter="url(#blur1)"/><rect x="495.25" y="540.25" width="17.75" height="17.75" fill="#8e8e8e"/><rect x="517.7" y="532.7" width="1.9" height="1.9" fill="#fff"/><rect x="517.7" y="536.97" width="1.9" height="1.9" fill="#e00000"/><rect x="517.7" y="541.24" width="1.9" height="1.9" fill="#00d000"/><rect x="517.7" y="545.51" width="1.9" height="1.9" fill="#1010e0"/><rect x="517.7" y="549.78" width="1.9" height="1.9" fill="#999"/><rect x="517.7" y="554.05" width="1.9" height="1.9" fill="#999"/><rect x="496.05" y="533.1" width="2.2" height="1.1" fill="#50544f"/><rect x="496.05" y="537.37" width="2.2" height="1.1" fill="#50544f"/>
<rect x="493.85" y="570.1" width="28.55" height="37.3" fill="#121312"/><rect x="494.65" y="570.9" width="26.95" height="35.7" fill="url(#body)"/><rect x="494.75" y="571" width="26.75" height="8.1" fill="url(#hB)"/><rect x="494.75" y="571" width="26.75" height="8.1" fill="url(#gloss)"/><rect x="496.75" y="573.7" width="17.2" height="3" rx="1.5" fill="#000" fill-opacity="0.36" filter="url(#blur1)"/><rect x="495.25" y="587.75" width="17.75" height="17.75" fill="#1616ff"/><rect x="517.7" y="580.2" width="1.9" height="1.9" fill="#fff"/><rect x="517.7" y="584.47" width="1.9" height="1.9" fill="#e00000"/><rect x="517.7" y="588.74" width="1.9" height="1.9" fill="#00d000"/><rect x="517.7" y="593.01" width="1.9" height="1.9" fill="#1010e0"/><rect x="517.7" y="597.28" width="1.9" height="1.9" fill="#999"/><rect x="517.7" y="601.55" width="1.9" height="1.9" fill="#999"/><rect x="496.05" y="580.6" width="2.2" height="1.1" fill="#50544f"/><rect x="496.05" y="584.87" width="2.2" height="1.1" fill="#50544f"/>
<rect x="496.85" y="682.1" width="28.55" height="38.05" fill="#121312"/><rect x="497.65" y="682.9" width="26.95" height="36.45" fill="url(#body)"/><rect x="497.75" y="683" width="26.75" height="8.1" fill="url(#hB)"/><rect x="497.75" y="683" width="26.75" height="8.1" fill="url(#gloss)"/><rect x="499.75" y="685.7" width="17.2" height="3" rx="1.5" fill="#000" fill-opacity="0.36" filter="url(#blur1)"/><svg x="497.75" y="700" width="18.25" height="18.25" viewBox="497.75 700 18.25 18.25"><rect x="497.75" y="700" width="18.25" height="18.25" fill="#2b22f5"/><circle cx="509.12" cy="713.54" r="2.39" fill="#1c28ff" fill-opacity="0.8"/><circle cx="498.28" cy="708.5" r="2.69" fill="#4d3cff" fill-opacity="0.8"/><circle cx="514.19" cy="702.07" r="1.74" fill="#1a10e8" fill-opacity="0.8"/><circle cx="504.7" cy="701.86" r="1.3" fill="#1a10e8" fill-opacity="0.8"/><circle cx="505.2" cy="703.32" r="2.53" fill="#3a1ae0" fill-opacity="0.8"/><circle cx="500.66" cy="714.55" r="1.08" fill="#1c28ff" fill-opacity="0.8"/><circle cx="505.87" cy="702.41" r="2.74" fill="#4d3cff" fill-opacity="0.8"/><circle cx="501.57" cy="703.93" r="2.76" fill="#1a10e8" fill-opacity="0.8"/><circle cx="503.03" cy="717.55" r="1.88" fill="#1a10e8" fill-opacity="0.8"/><circle cx="501.07" cy="717.68" r="1.19" fill="#3a1ae0" fill-opacity="0.8"/><circle cx="503.2" cy="706.59" r="1.13" fill="#1a10e8" fill-opacity="0.8"/><circle cx="502.56" cy="706.06" r="2.43" fill="#1c28ff" fill-opacity="0.8"/><circle cx="497.81" cy="712.37" r="1.48" fill="#5a55ff" fill-opacity="0.8"/><circle cx="504.24" cy="705.59" r="2.19" fill="#1a10e8" fill-opacity="0.8"/><circle cx="506.53" cy="712.86" r="0.91" fill="#4d3cff" fill-opacity="0.8"/><circle cx="515.07" cy="706.53" r="1.61" fill="#1c28ff" fill-opacity="0.8"/><circle cx="512.13" cy="706.68" r="1.96" fill="#4d3cff" fill-opacity="0.8"/><circle cx="506.01" cy="712.92" r="2.05" fill="#1a10e8" fill-opacity="0.8"/><circle cx="499.92" cy="704.49" r="2.44" fill="#3a1ae0" fill-opacity="0.8"/><circle cx="504.03" cy="706.47" r="1.85" fill="#3a1ae0" fill-opacity="0.8"/><circle cx="499.72" cy="713.66" r="2.39" fill="#5a55ff" fill-opacity="0.8"/><circle cx="498.42" cy="717.26" r="0.98" fill="#5a55ff" fill-opacity="0.8"/><circle cx="507.11" cy="706.62" r="1.1" fill="#5a55ff" fill-opacity="0.8"/><circle cx="514.62" cy="709.95" r="1.42" fill="#5a55ff" fill-opacity="0.8"/><circle cx="503.34" cy="714.58" r="2.05" fill="#5a55ff" fill-opacity="0.8"/><circle cx="515.94" cy="702.95" r="0.9" fill="#1c28ff" fill-opacity="0.8"/><circle cx="507.49" cy="707.41" r="1.27" fill="#1c28ff" fill-opacity="0.8"/><circle cx="504.02" cy="704.57" r="2.1" fill="#1a10e8" fill-opacity="0.8"/><circle cx="498.77" cy="716.72" r="0.87" fill="#3a1ae0" fill-opacity="0.8"/><circle cx="503.85" cy="703.78" r="2.76" fill="#1c28ff" fill-opacity="0.8"/></svg><rect x="520.7" y="692.2" width="1.9" height="1.9" fill="#fff"/><rect x="520.7" y="696.47" width="1.9" height="1.9" fill="#e00000"/><rect x="520.7" y="700.74" width="1.9" height="1.9" fill="#00d000"/><rect x="520.7" y="705.01" width="1.9" height="1.9" fill="#1010e0"/><rect x="520.7" y="709.28" width="1.9" height="1.9" fill="#999"/><rect x="520.7" y="713.55" width="1.9" height="1.9" fill="#999"/><rect x="499.05" y="692.6" width="2.2" height="1.1" fill="#50544f"/><rect x="499.05" y="696.87" width="2.2" height="1.1" fill="#50544f"/>
<rect x="570.85" y="679.6" width="28.8" height="22.55" fill="#121312"/><rect x="571.65" y="680.4" width="27.2" height="20.95" fill="url(#body)"/><rect x="571.75" y="680.5" width="27" height="8.1" fill="url(#hG)"/><rect x="571.75" y="680.5" width="27" height="8.1" fill="url(#gloss)"/><rect x="573.75" y="683.2" width="17.36" height="3" rx="1.5" fill="#000" fill-opacity="0.36" filter="url(#blur1)"/><rect x="594.8" y="689.55" width="2.1" height="2.1" fill="#fff"/><rect x="573.05" y="690.1" width="2.2" height="1.1" fill="#50544f"/><rect x="573.05" y="694.37" width="2.2" height="1.1" fill="#50544f"/><rect x="573.05" y="698.64" width="2.2" height="1.1" fill="#50544f"/>
<rect x="377.85" y="738.85" width="28.55" height="37.8" fill="#121312"/><rect x="378.65" y="739.65" width="26.95" height="36.2" fill="url(#body)"/><rect x="378.75" y="739.75" width="26.75" height="8.1" fill="url(#hB)"/><rect x="378.75" y="739.75" width="26.75" height="8.1" fill="url(#gloss)"/><rect x="380.75" y="742.45" width="17.2" height="3" rx="1.5" fill="#000" fill-opacity="0.36" filter="url(#blur1)"/><svg x="378.75" y="757" width="18.25" height="18" viewBox="0 0 18 18"><rect width="18" height="18" fill="#05040c"/><rect x="0" y="9" width="18" height="9" fill="#2418d8"/><rect x="9" y="2" width="6" height="8" fill="#1a12b0"/><circle cx="2.5" cy="5" r="2" fill="#e01020"/><circle cx="4" cy="14" r="2.2" fill="#d030c0"/><circle cx="9" cy="15" r="2" fill="#e04070"/><circle cx="14" cy="14.5" r="2.2" fill="#b030e0"/><rect x="0" y="16.5" width="18" height="1.5" fill="#20a080"/></svg><rect x="401.7" y="748.95" width="1.9" height="1.9" fill="#fff"/><rect x="401.7" y="753.22" width="1.9" height="1.9" fill="#e00000"/><rect x="401.7" y="757.49" width="1.9" height="1.9" fill="#00d000"/><rect x="401.7" y="761.76" width="1.9" height="1.9" fill="#1010e0"/><rect x="401.7" y="766.03" width="1.9" height="1.9" fill="#999"/><rect x="401.7" y="770.3" width="1.9" height="1.9" fill="#999"/><rect x="380.05" y="749.35" width="2.2" height="1.1" fill="#50544f"/><rect x="380.05" y="753.62" width="2.2" height="1.1" fill="#50544f"/>
<rect x="377.85" y="786.6" width="28.55" height="31.05" fill="#121312"/><rect x="378.65" y="787.4" width="26.95" height="29.45" fill="url(#body)"/><rect x="378.75" y="787.5" width="26.75" height="8.1" fill="url(#hR)"/><rect x="378.75" y="787.5" width="26.75" height="8.1" fill="url(#gloss)"/><rect x="380.75" y="790.2" width="17.2" height="3" rx="1.5" fill="#000" fill-opacity="0.36" filter="url(#blur1)"/><rect x="401.7" y="796.7" width="1.9" height="1.9" fill="#888"/><rect x="401.7" y="800.97" width="1.9" height="1.9" fill="#e00000"/><rect x="401.7" y="805.24" width="1.9" height="1.9" fill="#00d000"/><rect x="401.7" y="809.51" width="1.9" height="1.9" fill="#1010e0"/><rect x="401.7" y="813.78" width="1.9" height="1.9" fill="#eee"/>
<rect x="425.1" y="787.1" width="28.3" height="13.8" fill="#121312"/><rect x="425.9" y="787.9" width="26.7" height="12.2" fill="url(#body)"/><rect x="426" y="788" width="26.5" height="8.1" fill="url(#hG)"/><rect x="426" y="788" width="26.5" height="8.1" fill="url(#gloss)"/><rect x="428" y="790.7" width="17.05" height="3" rx="1.5" fill="#000" fill-opacity="0.36" filter="url(#blur1)"/><rect x="448.55" y="797.05" width="2.1" height="2.1" fill="#fff"/><rect x="427.05" y="797.05" width="2.1" height="2.1" fill="#fff"/>
<rect x="425.1" y="801.6" width="28.3" height="13.8" fill="#121312"/><rect x="425.9" y="802.4" width="26.7" height="12.2" fill="url(#body)"/><rect x="426" y="802.5" width="26.5" height="8.1" fill="url(#hG)"/><rect x="426" y="802.5" width="26.5" height="8.1" fill="url(#gloss)"/><rect x="428" y="805.2" width="17.05" height="3" rx="1.5" fill="#000" fill-opacity="0.36" filter="url(#blur1)"/><rect x="448.55" y="811.55" width="2.1" height="2.1" fill="#fff"/><rect x="427.05" y="811.55" width="2.1" height="2.1" fill="#fff"/>
<rect x="425.1" y="816.35" width="28.3" height="14.05" fill="#121312"/><rect x="425.9" y="817.15" width="26.7" height="12.45" fill="url(#body)"/><rect x="426" y="817.25" width="26.5" height="8.1" fill="url(#hG)"/><rect x="426" y="817.25" width="26.5" height="8.1" fill="url(#gloss)"/><rect x="428" y="819.95" width="17.05" height="3" rx="1.5" fill="#000" fill-opacity="0.36" filter="url(#blur1)"/><rect x="448.55" y="826.3" width="2.1" height="2.1" fill="#fff"/><rect x="427.05" y="826.3" width="2.1" height="2.1" fill="#fff"/>
<rect x="496.85" y="762.6" width="28.55" height="22.3" fill="#121312"/><rect x="497.65" y="763.4" width="26.95" height="20.7" fill="url(#body)"/><rect x="497.75" y="763.5" width="26.75" height="8.1" fill="url(#hG)"/><rect x="497.75" y="763.5" width="26.75" height="8.1" fill="url(#gloss)"/><rect x="499.75" y="766.2" width="17.2" height="3" rx="1.5" fill="#000" fill-opacity="0.36" filter="url(#blur1)"/><rect x="520.55" y="772.55" width="2.1" height="2.1" fill="#fff"/><rect x="498.8" y="772.55" width="2.1" height="2.1" fill="#fff"/><rect x="498.8" y="776.82" width="2.1" height="2.1" fill="#fff"/><rect x="499.05" y="781.64" width="2.2" height="1.1" fill="#50544f"/>
<rect x="496.85" y="786.6" width="28.55" height="22.55" fill="#121312"/><rect x="497.65" y="787.4" width="26.95" height="20.95" fill="url(#body)"/><rect x="497.75" y="787.5" width="26.75" height="8.1" fill="url(#hG)"/><rect x="497.75" y="787.5" width="26.75" height="8.1" fill="url(#gloss)"/><rect x="499.75" y="790.2" width="17.2" height="3" rx="1.5" fill="#000" fill-opacity="0.36" filter="url(#blur1)"/><rect x="520.55" y="796.55" width="2.1" height="2.1" fill="#fff"/><rect x="498.8" y="796.55" width="2.1" height="2.1" fill="#fff"/><rect x="498.8" y="800.82" width="2.1" height="2.1" fill="#fff"/><rect x="499.05" y="805.64" width="2.2" height="1.1" fill="#50544f"/>
<rect x="496.85" y="810.85" width="28.55" height="22.3" fill="#121312"/><rect x="497.65" y="811.65" width="26.95" height="20.7" fill="url(#body)"/><rect x="497.75" y="811.75" width="26.75" height="8.1" fill="url(#hG)"/><rect x="497.75" y="811.75" width="26.75" height="8.1" fill="url(#gloss)"/><rect x="499.75" y="814.45" width="17.2" height="3" rx="1.5" fill="#000" fill-opacity="0.36" filter="url(#blur1)"/><rect x="520.55" y="820.8" width="2.1" height="2.1" fill="#fff"/><rect x="498.8" y="820.8" width="2.1" height="2.1" fill="#fff"/><rect x="498.8" y="825.07" width="2.1" height="2.1" fill="#fff"/><rect x="499.05" y="829.89" width="2.2" height="1.1" fill="#50544f"/>
<rect x="496.85" y="834.6" width="28.55" height="22.05" fill="#121312"/><rect x="497.65" y="835.4" width="26.95" height="20.45" fill="url(#body)"/><rect x="497.75" y="835.5" width="26.75" height="8.1" fill="url(#hG)"/><rect x="497.75" y="835.5" width="26.75" height="8.1" fill="url(#gloss)"/><rect x="499.75" y="838.2" width="17.2" height="3" rx="1.5" fill="#000" fill-opacity="0.36" filter="url(#blur1)"/><rect x="520.55" y="844.55" width="2.1" height="2.1" fill="#fff"/><rect x="498.8" y="844.55" width="2.1" height="2.1" fill="#fff"/><rect x="498.8" y="848.82" width="2.1" height="2.1" fill="#fff"/><rect x="499.05" y="853.64" width="2.2" height="1.1" fill="#50544f"/>
<rect x="377.85" y="882.1" width="28.55" height="13.55" fill="#121312"/><rect x="378.65" y="882.9" width="26.95" height="11.95" fill="url(#body)"/><rect x="378.75" y="883" width="26.75" height="8.1" fill="url(#hR)" opacity="0.7"/><rect x="378.75" y="883" width="26.75" height="8.1" fill="url(#gloss)"/><rect x="380.75" y="885.7" width="17.2" height="3" rx="1.5" fill="#000" fill-opacity="0.36" filter="url(#blur1)"/><rect x="401.55" y="892.05" width="2.1" height="2.1" fill="#fff"/>
<rect x="681.35" y="546.35" width="29.05" height="13.8" fill="#121312"/><rect x="682.15" y="547.15" width="27.45" height="12.2" fill="url(#body)"/><rect x="682.25" y="547.25" width="27.25" height="8.1" fill="url(#hG)"/><rect x="682.25" y="547.25" width="27.25" height="8.1" fill="url(#gloss)"/><rect x="684.25" y="549.95" width="17.52" height="3" rx="1.5" fill="#000" fill-opacity="0.36" filter="url(#blur1)"/><rect x="705.55" y="556.3" width="2.1" height="2.1" fill="#fff"/>
<rect x="776.6" y="543.35" width="28.8" height="13.8" fill="#121312"/><rect x="777.4" y="544.15" width="27.2" height="12.2" fill="url(#body)"/><rect x="777.5" y="544.25" width="27" height="8.1" fill="url(#hL)"/><rect x="777.5" y="544.25" width="27" height="8.1" fill="url(#gloss)"/><rect x="779.5" y="546.95" width="17.36" height="3" rx="1.5" fill="#000" fill-opacity="0.36" filter="url(#blur1)"/><rect x="800.55" y="553.3" width="2.1" height="2.1" fill="#fff"/>
<rect x="726.1" y="581.6" width="28.8" height="18.3" fill="#121312"/><rect x="726.9" y="582.4" width="27.2" height="16.7" fill="url(#body)"/><rect x="727" y="582.5" width="27" height="8.1" fill="url(#hS)"/><rect x="727" y="582.5" width="27" height="8.1" fill="url(#gloss)"/><rect x="729" y="585.2" width="17.36" height="3" rx="1.5" fill="#000" fill-opacity="0.36" filter="url(#blur1)"/><rect x="750.05" y="591.55" width="2.1" height="2.1" fill="#fff"/><rect x="728.3" y="592.1" width="2.2" height="1.1" fill="#50544f"/><rect x="728.3" y="596.37" width="2.2" height="1.1" fill="#50544f"/>
<rect x="740.35" y="607.85" width="28.8" height="14.05" fill="#121312"/><rect x="741.15" y="608.65" width="27.2" height="12.45" fill="url(#body)"/><rect x="741.25" y="608.75" width="27" height="8.1" fill="url(#hG)"/><rect x="741.25" y="608.75" width="27" height="8.1" fill="url(#gloss)"/><rect x="743.25" y="611.45" width="17.36" height="3" rx="1.5" fill="#000" fill-opacity="0.36" filter="url(#blur1)"/><rect x="764.3" y="617.8" width="2.1" height="2.1" fill="#fff"/>
<rect x="832.5" y="565.4" width="24.2" height="23.8" fill="#121312"/><rect x="833.3" y="566.2" width="22.6" height="22.2" fill="url(#body)"/><rect x="833.4" y="566.3" width="22.4" height="7" fill="url(#hS)"/><rect x="833.4" y="566.3" width="22.4" height="7" fill="url(#gloss)"/><rect x="835.4" y="569" width="14.51" height="3" rx="1.5" fill="#000" fill-opacity="0.36" filter="url(#blur1)"/><rect x="851.85" y="573.75" width="2.1" height="2.1" fill="#fff"/><rect x="834.45" y="573.75" width="2.1" height="2.1" fill="#fff"/><rect x="834.45" y="578.12" width="2.1" height="2.1" fill="#fff"/><rect x="834.45" y="582.49" width="2.1" height="2.1" fill="#fff"/>
<rect x="895.85" y="567.1" width="28.3" height="95.05" fill="#121312"/><rect x="896.65" y="567.9" width="26.7" height="93.45" fill="url(#body)"/><rect x="896.75" y="568" width="26.5" height="8.1" fill="url(#hD)"/><rect x="896.75" y="568" width="26.5" height="8.1" fill="url(#gloss)"/><rect x="898.75" y="570.7" width="17.05" height="3" rx="1.5" fill="#000" fill-opacity="0.36" filter="url(#blur1)"/><rect x="919.65" y="576.8" width="1.5" height="1.5" fill="#8a8a8a"/><rect x="919.65" y="581.1" width="1.5" height="1.5" fill="#8a8a8a"/><rect x="919.65" y="585.4" width="1.5" height="1.5" fill="#8a8a8a"/><rect x="919.65" y="589.7" width="1.5" height="1.5" fill="#8a8a8a"/><rect x="919.65" y="594" width="1.5" height="1.5" fill="#8a8a8a"/><rect x="919.65" y="598.3" width="1.5" height="1.5" fill="#8a8a8a"/><rect x="919.65" y="602.6" width="1.5" height="1.5" fill="#8a8a8a"/><rect x="919.65" y="606.9" width="1.5" height="1.5" fill="#8a8a8a"/><rect x="919.3" y="610.85" width="2.1" height="2.1" fill="#fff"/><rect x="919.65" y="615.5" width="1.5" height="1.5" fill="#8a8a8a"/><rect x="919.65" y="619.8" width="1.5" height="1.5" fill="#8a8a8a"/><rect x="919.65" y="624.1" width="1.5" height="1.5" fill="#8a8a8a"/><rect x="919.65" y="628.4" width="1.5" height="1.5" fill="#8a8a8a"/><rect x="919.65" y="632.7" width="1.5" height="1.5" fill="#8a8a8a"/><rect x="919.65" y="637" width="1.5" height="1.5" fill="#8a8a8a"/><rect x="919.65" y="641.3" width="1.5" height="1.5" fill="#8a8a8a"/><rect x="919.3" y="645.25" width="2.1" height="2.1" fill="#fff"/><rect x="919.65" y="649.9" width="1.5" height="1.5" fill="#8a8a8a"/><rect x="919.65" y="654.2" width="1.5" height="1.5" fill="#8a8a8a"/><rect x="919.65" y="658.5" width="1.5" height="1.5" fill="#8a8a8a"/><rect x="897.8" y="576.45" width="2.1" height="2.1" fill="#fff"/>
<rect x="1371.6" y="385.35" width="28.55" height="28.55" fill="#121312"/><rect x="1372.4" y="386.15" width="26.95" height="26.95" fill="url(#body)"/><rect x="1372.5" y="386.25" width="26.75" height="8.1" fill="url(#hG)"/><rect x="1372.5" y="386.25" width="26.75" height="8.1" fill="url(#gloss)"/><rect x="1374.5" y="388.95" width="17.2" height="3" rx="1.5" fill="#000" fill-opacity="0.36" filter="url(#blur1)"/><rect x="1372.75" y="394.5" width="18" height="18" fill="#7f8458"/><rect x="1395.3" y="395.3" width="2.1" height="2.1" fill="#fff"/>
<rect x="1422.1" y="392.6" width="28.3" height="13.3" fill="#121312"/><rect x="1422.9" y="393.4" width="26.7" height="11.7" fill="url(#body)"/><rect x="1423" y="393.5" width="26.5" height="8.1" fill="url(#hG)"/><rect x="1423" y="393.5" width="26.5" height="8.1" fill="url(#gloss)"/><rect x="1425" y="396.2" width="17.05" height="3" rx="1.5" fill="#000" fill-opacity="0.36" filter="url(#blur1)"/><rect x="1445.55" y="402.55" width="2.1" height="2.1" fill="#fff"/><rect x="1424.05" y="402.55" width="2.1" height="2.1" fill="#fff"/>
<rect x="1472.6" y="430.1" width="28.8" height="22.05" fill="#121312"/><rect x="1473.4" y="430.9" width="27.2" height="20.45" fill="url(#body)"/><rect x="1473.5" y="431" width="27" height="8.1" fill="url(#hG)"/><rect x="1473.5" y="431" width="27" height="8.1" fill="url(#gloss)"/><rect x="1475.5" y="433.7" width="17.36" height="3" rx="1.5" fill="#000" fill-opacity="0.36" filter="url(#blur1)"/><rect x="1496.55" y="440.05" width="2.1" height="2.1" fill="#fff"/><rect x="1474.8" y="440.6" width="2.2" height="1.1" fill="#50544f"/><rect x="1474.8" y="444.87" width="2.2" height="1.1" fill="#50544f"/><rect x="1474.8" y="449.14" width="2.2" height="1.1" fill="#50544f"/>
<rect x="1543.85" y="430.1" width="28.3" height="22.05" fill="#121312"/><rect x="1544.65" y="430.9" width="26.7" height="20.45" fill="url(#body)"/><rect x="1544.75" y="431" width="26.5" height="8.1" fill="url(#hG)"/><rect x="1544.75" y="431" width="26.5" height="8.1" fill="url(#gloss)"/><rect x="1546.75" y="433.7" width="17.05" height="3" rx="1.5" fill="#000" fill-opacity="0.36" filter="url(#blur1)"/><rect x="1567.3" y="440.05" width="2.1" height="2.1" fill="#fff"/><rect x="1546.05" y="440.6" width="2.2" height="1.1" fill="#50544f"/><rect x="1546.05" y="444.87" width="2.2" height="1.1" fill="#50544f"/><rect x="1546.05" y="449.14" width="2.2" height="1.1" fill="#50544f"/>
<rect x="1576.6" y="444.85" width="28.8" height="13.8" fill="#121312"/><rect x="1577.4" y="445.65" width="27.2" height="12.2" fill="url(#body)"/><rect x="1577.5" y="445.75" width="27" height="8.1" fill="url(#hL)"/><rect x="1577.5" y="445.75" width="27" height="8.1" fill="url(#gloss)"/><rect x="1579.5" y="448.45" width="17.36" height="3" rx="1.5" fill="#000" fill-opacity="0.36" filter="url(#blur1)"/><rect x="1600.55" y="454.8" width="2.1" height="2.1" fill="#fff"/>
<rect x="1606.6" y="439.3" width="28.6" height="94.7" fill="#121312"/><rect x="1607.4" y="440.1" width="27" height="93.1" fill="url(#body)"/><rect x="1607.5" y="440.2" width="26.8" height="7.2" fill="url(#hO)"/><rect x="1607.5" y="440.2" width="26.8" height="7.2" fill="url(#gloss)"/><rect x="1609.5" y="442.9" width="17.24" height="3" rx="1.5" fill="#000" fill-opacity="0.36" filter="url(#blur1)"/><rect x="1608.55" y="448.65" width="2.1" height="2.1" fill="#fff"/><rect x="1608.55" y="452.92" width="2.1" height="2.1" fill="#fff"/><rect x="1608.9" y="457.64" width="1.5" height="1.3" fill="#b8b8b8"/><rect x="1608.55" y="461.46" width="2.1" height="2.1" fill="#fff"/><rect x="1608.9" y="466.18" width="1.5" height="1.3" fill="#b8b8b8"/><rect x="1608.9" y="470.45" width="1.5" height="1.3" fill="#b8b8b8"/><rect x="1608.9" y="474.72" width="1.5" height="1.3" fill="#4a4a4a"/><rect x="1608.9" y="478.99" width="1.5" height="1.3" fill="#4a4a4a"/><rect x="1608.55" y="482.81" width="2.1" height="2.1" fill="#fff"/><rect x="1608.9" y="487.53" width="1.5" height="1.3" fill="#b8b8b8"/><rect x="1608.9" y="491.8" width="1.5" height="1.3" fill="#b8b8b8"/><rect x="1608.9" y="496.07" width="1.5" height="1.3" fill="#4a4a4a"/><rect x="1608.9" y="500.34" width="1.5" height="1.3" fill="#4a4a4a"/><rect x="1608.9" y="504.61" width="1.5" height="1.3" fill="#b8b8b8"/><rect x="1608.9" y="508.88" width="1.5" height="1.3" fill="#4a4a4a"/><rect x="1608.9" y="513.15" width="1.5" height="1.3" fill="#4a4a4a"/><rect x="1608.55" y="516.97" width="2.1" height="2.1" fill="#fff"/><rect x="1608.9" y="521.69" width="1.5" height="1.3" fill="#4a4a4a"/><rect x="1608.9" y="525.96" width="1.5" height="1.3" fill="#b8b8b8"/><rect x="1608.9" y="530.23" width="1.5" height="1.3" fill="#4a4a4a"/>
<rect x="1564.6" y="477.6" width="28.55" height="22.05" fill="#121312"/><rect x="1565.4" y="478.4" width="26.95" height="20.45" fill="url(#body)"/><rect x="1565.5" y="478.5" width="26.75" height="8.1" fill="url(#hG)"/><rect x="1565.5" y="478.5" width="26.75" height="8.1" fill="url(#gloss)"/><rect x="1567.5" y="481.2" width="17.2" height="3" rx="1.5" fill="#000" fill-opacity="0.36" filter="url(#blur1)"/><rect x="1588.3" y="487.55" width="2.1" height="2.1" fill="#fff"/><rect x="1566.8" y="488.1" width="2.2" height="1.1" fill="#50544f"/><rect x="1566.8" y="492.37" width="2.2" height="1.1" fill="#50544f"/><rect x="1566.8" y="496.64" width="2.2" height="1.1" fill="#50544f"/>
<rect x="1529.1" y="492.35" width="28.3" height="13.8" fill="#121312"/><rect x="1529.9" y="493.15" width="26.7" height="12.2" fill="url(#body)"/><rect x="1530" y="493.25" width="26.5" height="8.1" fill="url(#hG)"/><rect x="1530" y="493.25" width="26.5" height="8.1" fill="url(#gloss)"/><rect x="1532" y="495.95" width="17.05" height="3" rx="1.5" fill="#000" fill-opacity="0.36" filter="url(#blur1)"/><rect x="1552.55" y="502.3" width="2.1" height="2.1" fill="#fff"/><rect x="1531.05" y="502.3" width="2.1" height="2.1" fill="#fff"/>
<rect x="1472.6" y="584.4" width="28.8" height="37.8" fill="#121312"/><rect x="1473.4" y="585.2" width="27.2" height="36.2" fill="url(#body)"/><rect x="1473.5" y="585.3" width="27" height="8.1" fill="url(#hB)"/><rect x="1473.5" y="585.3" width="27" height="8.1" fill="url(#gloss)"/><rect x="1475.5" y="588" width="17.36" height="3" rx="1.5" fill="#000" fill-opacity="0.36" filter="url(#blur1)"/><svg x="1473.3" y="602.4" width="18.9" height="18.1" viewBox="1473.3 602.4 18.9 18.1"><rect x="1473.3" y="602.4" width="18.9" height="18.1" fill="#2b22f5"/><circle cx="1485.07" cy="615.83" r="2.39" fill="#1c28ff" fill-opacity="0.8"/><circle cx="1473.85" cy="610.83" r="2.69" fill="#4d3cff" fill-opacity="0.8"/><circle cx="1490.33" cy="604.45" r="1.74" fill="#1a10e8" fill-opacity="0.8"/><circle cx="1480.5" cy="604.25" r="1.3" fill="#1a10e8" fill-opacity="0.8"/><circle cx="1481.01" cy="605.7" r="2.53" fill="#3a1ae0" fill-opacity="0.8"/><circle cx="1476.32" cy="616.83" r="1.08" fill="#1c28ff" fill-opacity="0.8"/><circle cx="1481.71" cy="604.79" r="2.74" fill="#4d3cff" fill-opacity="0.8"/><circle cx="1477.26" cy="606.3" r="2.76" fill="#1a10e8" fill-opacity="0.8"/><circle cx="1478.77" cy="619.8" r="1.88" fill="#1a10e8" fill-opacity="0.8"/><circle cx="1476.73" cy="619.93" r="1.19" fill="#3a1ae0" fill-opacity="0.8"/><circle cx="1478.95" cy="608.94" r="1.13" fill="#1a10e8" fill-opacity="0.8"/><circle cx="1478.29" cy="608.41" r="2.43" fill="#1c28ff" fill-opacity="0.8"/><circle cx="1473.36" cy="614.67" r="1.48" fill="#5a55ff" fill-opacity="0.8"/><circle cx="1480.02" cy="607.94" r="2.19" fill="#1a10e8" fill-opacity="0.8"/><circle cx="1482.4" cy="615.15" r="0.91" fill="#4d3cff" fill-opacity="0.8"/><circle cx="1491.24" cy="608.87" r="1.61" fill="#1c28ff" fill-opacity="0.8"/><circle cx="1488.19" cy="609.03" r="1.96" fill="#4d3cff" fill-opacity="0.8"/><circle cx="1481.86" cy="615.21" r="2.05" fill="#1a10e8" fill-opacity="0.8"/><circle cx="1475.55" cy="606.85" r="2.44" fill="#3a1ae0" fill-opacity="0.8"/><circle cx="1479.81" cy="608.82" r="1.85" fill="#3a1ae0" fill-opacity="0.8"/><circle cx="1475.34" cy="615.95" r="2.39" fill="#5a55ff" fill-opacity="0.8"/><circle cx="1473.99" cy="619.52" r="0.98" fill="#5a55ff" fill-opacity="0.8"/><circle cx="1482.99" cy="608.96" r="1.1" fill="#5a55ff" fill-opacity="0.8"/><circle cx="1490.77" cy="612.27" r="1.42" fill="#5a55ff" fill-opacity="0.8"/><circle cx="1479.09" cy="616.86" r="2.05" fill="#5a55ff" fill-opacity="0.8"/><circle cx="1492.14" cy="605.32" r="0.9" fill="#1c28ff" fill-opacity="0.8"/><circle cx="1483.38" cy="609.75" r="1.27" fill="#1c28ff" fill-opacity="0.8"/><circle cx="1479.8" cy="606.93" r="2.1" fill="#1a10e8" fill-opacity="0.8"/><circle cx="1474.35" cy="618.98" r="0.87" fill="#3a1ae0" fill-opacity="0.8"/><circle cx="1479.62" cy="606.15" r="2.76" fill="#1c28ff" fill-opacity="0.8"/></svg><rect x="1496.7" y="594.5" width="1.9" height="1.9" fill="#fff"/><rect x="1496.7" y="598.77" width="1.9" height="1.9" fill="#e00000"/><rect x="1496.7" y="603.04" width="1.9" height="1.9" fill="#00d000"/><rect x="1496.7" y="607.31" width="1.9" height="1.9" fill="#1010e0"/><rect x="1496.7" y="611.58" width="1.9" height="1.9" fill="#999"/><rect x="1496.7" y="615.85" width="1.9" height="1.9" fill="#999"/><rect x="1474.8" y="594.9" width="2.2" height="1.1" fill="#50544f"/><rect x="1474.8" y="599.17" width="2.2" height="1.1" fill="#50544f"/>
</g>
<g opacity="0.999"><text x="547.95" y="77.35" font-family="Liberation Sans, sans-serif" font-size="11.6" fill="#484848" stroke="#484848" stroke-width="0.25" textLength="152.6" lengthAdjust="spacingAndGlyphs">BotLimestone_ColorVariation</text><text x="1088.7" y="175.6" font-family="Liberation Sans, sans-serif" font-size="11.6" fill="#484848" stroke="#484848" stroke-width="0.25" textLength="22.1" lengthAdjust="spacingAndGlyphs">RVT</text><text x="559.7" y="309.85" font-family="Liberation Sans, sans-serif" font-size="11.6" fill="#484848" stroke="#484848" stroke-width="0.25" textLength="155.85" lengthAdjust="spacingAndGlyphs">TopLimestone_ColorVariation</text><text x="367.2" y="448.6" font-family="Liberation Sans, sans-serif" font-size="11.6" fill="#484848" stroke="#484848" stroke-width="0.25" textLength="147.6" lengthAdjust="spacingAndGlyphs">IntactLimestone_BaseMaps</text><text x="681.95" y="517.85" font-family="Liberation Sans, sans-serif" font-size="11.6" fill="#484848" stroke="#484848" stroke-width="0.25" textLength="230.6" lengthAdjust="spacingAndGlyphs">TopLimestone_Normal+DetailNormal_Blend</text><text x="362.95" y="649.1" font-family="Liberation Sans, sans-serif" font-size="11.6" fill="#484848" stroke="#484848" stroke-width="0.25" textLength="70.6" lengthAdjust="spacingAndGlyphs">TextureBlend</text><text x="1472.7" y="559.1" font-family="Liberation Sans, sans-serif" font-size="11.6" fill="#484848" stroke="#484848" stroke-width="0.25" textLength="92.5" lengthAdjust="spacingAndGlyphs">BrokenLimestone</text></g>
<g fill="none" stroke="#0ca6f4" stroke-linejoin="round">
<rect x="830.6" y="563.3" width="28.9" height="28.9" stroke-width="4.9" rx="1.2"/>
<path d="M860 562.6L1704.5 696.6M830.4 592.5L898 945" stroke-width="4.6"/>
</g>
<rect x="895.6" y="694.7" width="810.9" height="252.2" fill="#0ca6f4" rx="3"/>
<rect x="901" y="700.1" width="799.7" height="241.4" fill="#252525"/>
<defs><clipPath id="ic"><rect x="901" y="700.1" width="799.7" height="241.4"/></clipPath>
<linearGradient id="iR" x1="0" y1="0" x2="1" y2="0"><stop offset="0" stop-color="#a81414"/><stop offset="0.55" stop-color="#861515"/><stop offset="1" stop-color="#2a1515"/></linearGradient>
<linearGradient id="iG" x1="0" y1="0" x2="1" y2="0"><stop offset="0" stop-color="#5f9460"/><stop offset="0.55" stop-color="#4b744c"/><stop offset="1" stop-color="#222b22"/></linearGradient>
<linearGradient id="iB" x1="0" y1="0" x2="1" y2="0"><stop offset="0" stop-color="#1f7aa6"/><stop offset="0.55" stop-color="#1a6388"/><stop offset="1" stop-color="#182a34"/></linearGradient>
<linearGradient id="iS" x1="0" y1="0" x2="1" y2="0"><stop offset="0" stop-color="#4f7aa2"/><stop offset="0.55" stop-color="#3f6282"/><stop offset="1" stop-color="#1e2a36"/></linearGradient>
<linearGradient id="iO" x1="0" y1="0" x2="1" y2="0.5"><stop offset="0" stop-color="#2222c8"/><stop offset="0.5" stop-color="#1e1ea6"/><stop offset="1" stop-color="#16163a"/></linearGradient>
<linearGradient id="igl" x1="0" y1="0" x2="0" y2="1"><stop offset="0" stop-color="#fff" stop-opacity="0.13"/><stop offset="0.5" stop-color="#fff" stop-opacity="0.0"/><stop offset="1" stop-color="#000" stop-opacity="0.28"/></linearGradient>
<filter id="ish" x="-10%" y="-20%" width="120%" height="150%"><feGaussianBlur stdDeviation="1.3"/></filter>
<pattern id="ntex" width="6" height="6" patternUnits="userSpaceOnUse"><rect width="6" height="6" fill="#2222f2"/><path d="M0 1.5Q1.5 0 3 1.5T6 1.5M0 4.5Q1.5 3 3 4.5T6 4.5" stroke="#4a3cff" stroke-width="0.7" fill="none"/><path d="M0 3Q1.5 4.5 3 3T6 3" stroke="#1414d0" stroke-width="0.6" fill="none"/></pattern>
</defs>
<g clip-path="url(#ic)" opacity="0.999">
<path d="M906.07 700V942M913.19 700V942M920.30 700V942M927.41 700V942M934.52 700V942M941.64 700V942M948.75 700V942M955.86 700V942M962.97 700V942M970.09 700V942M977.20 700V942M984.31 700V942M991.42 700V942M998.54 700V942M1005.65 700V942M1012.76 700V942M1019.87 700V942M1026.99 700V942M1034.10 700V942M1041.21 700V942M1048.32 700V942M1055.44 700V942M1062.55 700V942M1069.66 700V942M1076.77 700V942M1083.89 700V942M1091.00 700V942M1098.11 700V942M1105.22 700V942M1112.34 700V942M1119.45 700V942M1126.56 700V942M1133.67 700V942M1140.79 700V942M1147.90 700V942M1155.01 700V942M1162.12 700V942M1169.24 700V942M1176.35 700V942M1183.46 700V942M1190.57 700V942M1197.69 700V942M1204.80 700V942M1211.91 700V942M1219.02 700V942M1226.14 700V942M1233.25 700V942M1240.36 700V942M1247.47 700V942M1254.59 700V942M1261.70 700V942M1268.81 700V942M1275.92 700V942M1283.04 700V942M1290.15 700V942M1297.26 700V942M1304.37 700V942M1311.49 700V942M1318.60 700V942M1325.71 700V942M1332.82 700V942M1339.94 700V942M1347.05 700V942M1354.16 700V942M1361.27 700V942M1368.39 700V942M1375.50 700V942M1382.61 700V942M1389.72 700V942M1396.84 700V942M1403.95 700V942M1411.06 700V942M1418.17 700V942M1425.29 700V942M1432.40 700V942M1439.51 700V942M1446.62 700V942M1453.74 700V942M1460.85 700V942M1467.96 700V942M1475.07 700V942M1482.19 700V942M1489.30 700V942M1496.41 700V942M1503.52 700V942M1510.64 700V942M1517.75 700V942M1524.86 700V942M1531.97 700V942M1539.09 700V942M1546.20 700V942M1553.31 700V942M1560.42 700V942M1567.54 700V942M1574.65 700V942M1581.76 700V942M1588.87 700V942M1595.99 700V942M1603.10 700V942M1610.21 700V942M1617.32 700V942M1624.44 700V942M1631.55 700V942M1638.66 700V942M1645.77 700V942M1652.89 700V942M1660.00 700V942M1667.11 700V942M1674.22 700V942M1681.34 700V942M1688.45 700V942M1695.56 700V942M901 700.31H1701M901 707.42H1701M901 714.54H1701M901 721.65H1701M901 728.76H1701M901 735.87H1701M901 742.99H1701M901 750.10H1701M901 757.21H1701M901 764.32H1701M901 771.44H1701M901 778.55H1701M901 785.66H1701M901 792.77H1701M901 799.89H1701M901 807.00H1701M901 814.11H1701M901 821.22H1701M901 828.34H1701M901 835.45H1701M901 842.56H1701M901 849.67H1701M901 856.79H1701M901 863.90H1701M901 871.01H1701M901 878.12H1701M901 885.24H1701M901 892.35H1701M901 899.46H1701M901 906.57H1701M901 913.69H1701M901 920.80H1701M901 927.91H1701M901 935.02H1701" stroke="#2f2f2f" stroke-width="1" fill="none" shape-rendering="crispEdges"/>
<path d="M948.75 700V942M1005.65 700V942M1062.55 700V942M1119.45 700V942M1176.35 700V942M1233.25 700V942M1290.15 700V942M1347.05 700V942M1403.95 700V942M1460.85 700V942M1517.75 700V942M1574.65 700V942M1631.55 700V942M1688.45 700V942M901 750.10H1701M901 807.00H1701M901 863.90H1701M901 920.80H1701" stroke="#191919" stroke-width="1" fill="none" shape-rendering="crispEdges"/>
<path d="M963 769.25C997.67 769.25 1032.33 769.25 1067 769.25M1010.5 818.75C1042 818.75 1035.5 780.75 1067 780.75M1101.5 769.25C1123.22 769.25 1144.78 769.1 1166.5 769.1M1122 889.5C1173.03 889.5 1115.47 780.9 1166.5 780.9M1246 769.1C1262.33 769.1 1277.67 768.1 1294 768.1M1272.3 882.5C1313.77 882.5 1252.53 779.8 1294 779.8M1356.5 768.1C1377.47 768.1 1386.53 780 1407.5 780M1380.8 726.75C1403.52 726.75 1384.78 768.2 1407.5 768.2M1499.8 768.2C1511.05 768.2 1509.75 780.75 1521 780.75M1589.5 769.25C1609.42 769.25 1614.58 784 1634.5 784" fill="none" stroke="#d2d2d2" stroke-width="1.15"/>
<rect x="913.9" y="751.8" width="54.5" height="25.3" rx="3" fill="#000" fill-opacity="0.55" filter="url(#ish)"/><rect x="914.4" y="751.3" width="53.5" height="23.8" rx="2.6" fill="#141514" stroke="#0b0b0b" stroke-width="0.8"/><path d="M914.8 761.9V753.9Q914.8 751.7 917 751.7H965.3Q967.5 751.7 967.5 753.9V761.9Z" fill="url(#iR)"/><path d="M914.8 761.9V753.9Q914.8 751.7 917 751.7H965.3Q967.5 751.7 967.5 753.9V761.9Z" fill="url(#igl)"/><text x="919.95" y="759.65" font-family="Liberation Sans, sans-serif" font-size="6.3" font-weight="bold" textLength="33" lengthAdjust="spacingAndGlyphs" fill="#000" fill-opacity="0.8">TexCoord[0]</text><text x="919.6" y="759.2" font-family="Liberation Sans, sans-serif" font-size="6.3" font-weight="bold" textLength="33" lengthAdjust="spacingAndGlyphs" fill="#f2f2f2">TexCoord[0]</text><path d="M960.1 754.8H964.9L962.5 758.2Z" fill="#f0f0f0"/>
<circle cx="960.5" cy="769.25" r="2.35" fill="#fff"/><path d="M962.6 767.95L964.2 769.25L962.6 770.55Z" fill="#fff"/>
<rect x="913.9" y="801.8" width="101.6" height="25.3" rx="3" fill="#000" fill-opacity="0.55" filter="url(#ish)"/><rect x="914.4" y="801.3" width="100.6" height="23.8" rx="2.6" fill="#141514" stroke="#0b0b0b" stroke-width="0.8"/><path d="M914.8 811.9V803.9Q914.8 801.7 917 801.7H1012.4Q1014.6 801.7 1014.6 803.9V811.9Z" fill="url(#iR)"/><path d="M914.8 811.9V803.9Q914.8 801.7 917 801.7H1012.4Q1014.6 801.7 1014.6 803.9V811.9Z" fill="url(#igl)"/><text x="919.95" y="809.65" font-family="Liberation Sans, sans-serif" font-size="6.3" font-weight="bold" textLength="80.5" lengthAdjust="spacingAndGlyphs" fill="#000" fill-opacity="0.8">Input DetailTilingMult (Scalar)</text><text x="919.6" y="809.2" font-family="Liberation Sans, sans-serif" font-size="6.3" font-weight="bold" textLength="80.5" lengthAdjust="spacingAndGlyphs" fill="#f2f2f2">Input DetailTilingMult (Scalar)</text><path d="M1007.2 804.8H1012L1009.6 808.2Z" fill="#f0f0f0"/>
<circle cx="920.6" cy="818.75" r="1.9" fill="#0c0c0c" stroke="#333" stroke-width="0.7"/>
<text x="926.85" y="821.25" font-family="Liberation Sans, sans-serif" font-size="5.9" textLength="19.3" lengthAdjust="spacingAndGlyphs" fill="#000" fill-opacity="0.8">Preview</text><text x="926.5" y="820.8" font-family="Liberation Sans, sans-serif" font-size="5.9" textLength="19.3" lengthAdjust="spacingAndGlyphs" fill="#f2f2f2" stroke="#f2f2f2" stroke-width="0.22">Preview</text>
<circle cx="1007.8" cy="818.75" r="2.35" fill="#fff"/><path d="M1009.9 817.45L1011.5 818.75L1009.9 820.05Z" fill="#fff"/>
<rect x="1062.6" y="751.8" width="44.2" height="37.2" rx="3" fill="#000" fill-opacity="0.55" filter="url(#ish)"/><rect x="1063.1" y="751.3" width="43.2" height="35.7" rx="2.6" fill="#141514" stroke="#0b0b0b" stroke-width="0.8"/><path d="M1063.5 761.9V753.9Q1063.5 751.7 1065.7 751.7H1103.7Q1105.9 751.7 1105.9 753.9V761.9Z" fill="url(#iG)"/><path d="M1063.5 761.9V753.9Q1063.5 751.7 1065.7 751.7H1103.7Q1105.9 751.7 1105.9 753.9V761.9Z" fill="url(#igl)"/><text x="1068.65" y="759.65" font-family="Liberation Sans, sans-serif" font-size="6.3" font-weight="bold" textLength="22.2" lengthAdjust="spacingAndGlyphs" fill="#000" fill-opacity="0.8">Multiply</text><text x="1068.3" y="759.2" font-family="Liberation Sans, sans-serif" font-size="6.3" font-weight="bold" textLength="22.2" lengthAdjust="spacingAndGlyphs" fill="#f2f2f2">Multiply</text><path d="M1098.5 754.8H1103.3L1100.9 758.2Z" fill="#f0f0f0"/>
<circle cx="1069.4" cy="769.25" r="2.1" fill="#3d3d3d" stroke="#2a2a2a" stroke-width="0.6"/><path d="M1071.6 768.25L1072.8 769.25L1071.6 770.25Z" fill="#3d3d3d"/>
<text x="1075.75" y="771.75" font-family="Liberation Sans, sans-serif" font-size="5.9" fill="#000" fill-opacity="0.8">A</text><text x="1075.4" y="771.3" font-family="Liberation Sans, sans-serif" font-size="5.9" fill="#f2f2f2" stroke="#f2f2f2" stroke-width="0.22">A</text>
<circle cx="1069.4" cy="780.75" r="2.1" fill="#3d3d3d" stroke="#2a2a2a" stroke-width="0.6"/><path d="M1071.6 779.75L1072.8 780.75L1071.6 781.75Z" fill="#3d3d3d"/>
<text x="1075.75" y="783.25" font-family="Liberation Sans, sans-serif" font-size="5.9" fill="#000" fill-opacity="0.8">B</text><text x="1075.4" y="782.8" font-family="Liberation Sans, sans-serif" font-size="5.9" fill="#f2f2f2" stroke="#f2f2f2" stroke-width="0.22">B</text>
<circle cx="1098.8" cy="769.25" r="2.35" fill="#fff"/><path d="M1100.9 767.95L1102.5 769.25L1100.9 770.55Z" fill="#fff"/>
<rect x="1162.3" y="751.8" width="88" height="95.8" rx="3" fill="#000" fill-opacity="0.55" filter="url(#ish)"/><rect x="1162.8" y="751.3" width="87" height="94.3" rx="2.6" fill="#141514" stroke="#0b0b0b" stroke-width="0.8"/><path d="M1163.2 761.9V753.9Q1163.2 751.7 1165.4 751.7H1247.2Q1249.4 751.7 1249.4 753.9V761.9Z" fill="url(#iB)"/><path d="M1163.2 761.9V753.9Q1163.2 751.7 1165.4 751.7H1247.2Q1249.4 751.7 1249.4 753.9V761.9Z" fill="url(#igl)"/><text x="1168.35" y="759.65" font-family="Liberation Sans, sans-serif" font-size="6.3" font-weight="bold" textLength="41.4" lengthAdjust="spacingAndGlyphs" fill="#000" fill-opacity="0.8">Texture Sample</text><text x="1168" y="759.2" font-family="Liberation Sans, sans-serif" font-size="6.3" font-weight="bold" textLength="41.4" lengthAdjust="spacingAndGlyphs" fill="#f2f2f2">Texture Sample</text><path d="M1242.1 758.5H1246.9L1244.5 755Z" fill="#f0f0f0"/>
<circle cx="1168.6" cy="769.1" r="2.1" fill="#3d3d3d" stroke="#2a2a2a" stroke-width="0.6"/><path d="M1170.8 768.1L1172 769.1L1170.8 770.1Z" fill="#3d3d3d"/>
<text x="1175.15" y="771.65" font-family="Liberation Sans, sans-serif" font-size="5.9" textLength="10.2" lengthAdjust="spacingAndGlyphs" fill="#000" fill-opacity="0.8">UVs</text><text x="1174.8" y="771.2" font-family="Liberation Sans, sans-serif" font-size="5.9" textLength="10.2" lengthAdjust="spacingAndGlyphs" fill="#f2f2f2" stroke="#f2f2f2" stroke-width="0.22">UVs</text>
<circle cx="1168.6" cy="780.9" r="2.1" fill="#3d3d3d" stroke="#2a2a2a" stroke-width="0.6"/><path d="M1170.8 779.9L1172 780.9L1170.8 781.9Z" fill="#3d3d3d"/>
<text x="1175.15" y="783.45" font-family="Liberation Sans, sans-serif" font-size="5.9" textLength="9" lengthAdjust="spacingAndGlyphs" fill="#000" fill-opacity="0.8">Tex</text><text x="1174.8" y="783" font-family="Liberation Sans, sans-serif" font-size="5.9" textLength="9" lengthAdjust="spacingAndGlyphs" fill="#f2f2f2" stroke="#f2f2f2" stroke-width="0.22">Tex</text>
<circle cx="1168.6" cy="792.75" r="1.9" fill="#0c0c0c" stroke="#333" stroke-width="0.7"/>
<text x="1175.15" y="795.35" font-family="Liberation Sans, sans-serif" font-size="5.9" textLength="47.2" lengthAdjust="spacingAndGlyphs" fill="#000" fill-opacity="0.8">Apply View MipBias</text><text x="1174.8" y="794.9" font-family="Liberation Sans, sans-serif" font-size="5.9" textLength="47.2" lengthAdjust="spacingAndGlyphs" fill="#f2f2f2" stroke="#f2f2f2" stroke-width="0.22">Apply View MipBias</text>
<circle cx="1242.9" cy="769.1" r="2.35" fill="#fff"/><path d="M1245 767.8L1246.6 769.1L1245 770.4Z" fill="#fff"/>
<text x="1238.45" y="771.65" font-family="Liberation Sans, sans-serif" font-size="5.9" text-anchor="end" textLength="10.2" lengthAdjust="spacingAndGlyphs" fill="#000" fill-opacity="0.8">RGB</text><text x="1238.1" y="771.2" font-family="Liberation Sans, sans-serif" font-size="5.9" text-anchor="end" textLength="10.2" lengthAdjust="spacingAndGlyphs" fill="#f2f2f2" stroke="#f2f2f2" stroke-width="0.22">RGB</text>
<circle cx="1242.9" cy="780.92" r="1.9" fill="#101010" stroke="#e01010" stroke-width="1.15"/><path d="M1245.2 779.72L1246.6 780.92L1245.2 782.12Z" fill="#e01010"/>
<text x="1238.45" y="783.47" font-family="Liberation Sans, sans-serif" font-size="5.9" text-anchor="end" textLength="3.4" lengthAdjust="spacingAndGlyphs" fill="#000" fill-opacity="0.8">R</text><text x="1238.1" y="783.02" font-family="Liberation Sans, sans-serif" font-size="5.9" text-anchor="end" textLength="3.4" lengthAdjust="spacingAndGlyphs" fill="#f2f2f2" stroke="#f2f2f2" stroke-width="0.22">R</text>
<circle cx="1242.9" cy="792.74" r="1.9" fill="#101010" stroke="#10d010" stroke-width="1.15"/><path d="M1245.2 791.54L1246.6 792.74L1245.2 793.94Z" fill="#10d010"/>
<text x="1238.45" y="795.29" font-family="Liberation Sans, sans-serif" font-size="5.9" text-anchor="end" textLength="3.7" lengthAdjust="spacingAndGlyphs" fill="#000" fill-opacity="0.8">G</text><text x="1238.1" y="794.84" font-family="Liberation Sans, sans-serif" font-size="5.9" text-anchor="end" textLength="3.7" lengthAdjust="spacingAndGlyphs" fill="#f2f2f2" stroke="#f2f2f2" stroke-width="0.22">G</text>
<circle cx="1242.9" cy="804.56" r="1.9" fill="#101010" stroke="#1515d8" stroke-width="1.15"/><path d="M1245.2 803.36L1246.6 804.56L1245.2 805.76Z" fill="#1515d8"/>
<text x="1238.45" y="807.11" font-family="Liberation Sans, sans-serif" font-size="5.9" text-anchor="end" textLength="3.4" lengthAdjust="spacingAndGlyphs" fill="#000" fill-opacity="0.8">B</text><text x="1238.1" y="806.66" font-family="Liberation Sans, sans-serif" font-size="5.9" text-anchor="end" textLength="3.4" lengthAdjust="spacingAndGlyphs" fill="#f2f2f2" stroke="#f2f2f2" stroke-width="0.22">B</text>
<circle cx="1242.9" cy="816.38" r="1.9" fill="#101010" stroke="#f0f0f0" stroke-width="1.15"/><path d="M1245.2 815.18L1246.6 816.38L1245.2 817.58Z" fill="#f0f0f0"/>
<text x="1238.45" y="818.93" font-family="Liberation Sans, sans-serif" font-size="5.9" text-anchor="end" textLength="3.6" lengthAdjust="spacingAndGlyphs" fill="#000" fill-opacity="0.8">A</text><text x="1238.1" y="818.48" font-family="Liberation Sans, sans-serif" font-size="5.9" text-anchor="end" textLength="3.6" lengthAdjust="spacingAndGlyphs" fill="#f2f2f2" stroke="#f2f2f2" stroke-width="0.22">A</text>
<circle cx="1242.9" cy="828.2" r="1.9" fill="#101010" stroke="#f0f0f0" stroke-width="1.15"/><path d="M1245.2 827L1246.6 828.2L1245.2 829.4Z" fill="#f0f0f0"/>
<text x="1238.45" y="830.75" font-family="Liberation Sans, sans-serif" font-size="5.9" text-anchor="end" textLength="14" lengthAdjust="spacingAndGlyphs" fill="#000" fill-opacity="0.8">RGBA</text><text x="1238.1" y="830.3" font-family="Liberation Sans, sans-serif" font-size="5.9" text-anchor="end" textLength="14" lengthAdjust="spacingAndGlyphs" fill="#f2f2f2" stroke="#f2f2f2" stroke-width="0.22">RGBA</text>
<rect x="1164.75" y="800.25" width="42.75" height="42.85" fill="url(#ntex)"/>
<rect x="1062.75" y="865.5" width="63.5" height="67" rx="3" fill="#000" fill-opacity="0.55" filter="url(#ish)"/><rect x="1063.25" y="865" width="62.5" height="65.5" rx="2.6" fill="#141514" stroke="#0b0b0b" stroke-width="0.8"/><path d="M1063.65 882.4V867.6Q1063.65 865.4 1065.85 865.4H1123.15Q1125.35 865.4 1125.35 867.6V882.4Z" fill="url(#iB)"/><path d="M1063.65 882.4V867.6Q1063.65 865.4 1065.85 865.4H1123.15Q1125.35 865.4 1125.35 867.6V882.4Z" fill="url(#igl)"/><text x="1068.8" y="873.35" font-family="Liberation Sans, sans-serif" font-size="6.3" font-weight="bold" textLength="36.5" lengthAdjust="spacingAndGlyphs" fill="#000" fill-opacity="0.8">Detail Normal</text><text x="1068.45" y="872.9" font-family="Liberation Sans, sans-serif" font-size="6.3" font-weight="bold" textLength="36.5" lengthAdjust="spacingAndGlyphs" fill="#f2f2f2">Detail Normal</text>
<path d="M1118.35 875.6H1123.15L1120.75 872.1Z" fill="#f0f0f0"/>
<text x="1068.5" y="880.1" font-family="Liberation Sans, sans-serif" font-size="5.4" font-style="italic" textLength="42.5" lengthAdjust="spacingAndGlyphs" fill="#7fa9bd">Param Tex Object</text>
<rect x="1065.5" y="885.5" width="42.5" height="42.5" fill="url(#ntex)"/>
<circle cx="1119.2" cy="889.5" r="2.35" fill="#fff"/><path d="M1121.3 888.2L1122.9 889.5L1121.3 890.8Z" fill="#fff"/>
<rect x="1176.5" y="865.5" width="100.25" height="25.25" rx="3" fill="#000" fill-opacity="0.55" filter="url(#ish)"/><rect x="1177" y="865" width="99.25" height="23.75" rx="2.6" fill="#141514" stroke="#0b0b0b" stroke-width="0.8"/><path d="M1177.4 875.6V867.6Q1177.4 865.4 1179.6 865.4H1273.65Q1275.85 865.4 1275.85 867.6V875.6Z" fill="url(#iR)"/><path d="M1177.4 875.6V867.6Q1177.4 865.4 1179.6 865.4H1273.65Q1275.85 865.4 1275.85 867.6V875.6Z" fill="url(#igl)"/><text x="1182.55" y="873.35" font-family="Liberation Sans, sans-serif" font-size="6.3" font-weight="bold" textLength="79.5" lengthAdjust="spacingAndGlyphs" fill="#000" fill-opacity="0.8">Input NormalFlatness (Scalar)</text><text x="1182.2" y="872.9" font-family="Liberation Sans, sans-serif" font-size="6.3" font-weight="bold" textLength="79.5" lengthAdjust="spacingAndGlyphs" fill="#f2f2f2">Input NormalFlatness (Scalar)</text><path d="M1268.45 868.5H1273.25L1270.85 871.9Z" fill="#f0f0f0"/>
<circle cx="1183" cy="882.5" r="1.9" fill="#0c0c0c" stroke="#333" stroke-width="0.7"/>
<text x="1189.55" y="885.05" font-family="Liberation Sans, sans-serif" font-size="5.9" textLength="19.3" lengthAdjust="spacingAndGlyphs" fill="#000" fill-opacity="0.8">Preview</text><text x="1189.2" y="884.6" font-family="Liberation Sans, sans-serif" font-size="5.9" textLength="19.3" lengthAdjust="spacingAndGlyphs" fill="#f2f2f2" stroke="#f2f2f2" stroke-width="0.22">Preview</text>
<circle cx="1269.5" cy="882.5" r="2.35" fill="#fff"/><path d="M1271.6 881.2L1273.2 882.5L1271.6 883.8Z" fill="#fff"/>
<rect x="1290.1" y="751.8" width="70.8" height="36.45" rx="3" fill="#000" fill-opacity="0.55" filter="url(#ish)"/><rect x="1290.6" y="751.3" width="69.8" height="34.95" rx="2.6" fill="#141514" stroke="#0b0b0b" stroke-width="0.8"/><path d="M1291 761.9V753.9Q1291 751.7 1293.2 751.7H1357.8Q1360 751.7 1360 753.9V761.9Z" fill="url(#iS)"/><path d="M1291 761.9V753.9Q1291 751.7 1293.2 751.7H1357.8Q1360 751.7 1360 753.9V761.9Z" fill="url(#igl)"/><text x="1296.15" y="759.65" font-family="Liberation Sans, sans-serif" font-size="6.3" font-weight="bold" textLength="38.4" lengthAdjust="spacingAndGlyphs" fill="#000" fill-opacity="0.8">FlattenNormal</text><text x="1295.8" y="759.2" font-family="Liberation Sans, sans-serif" font-size="6.3" font-weight="bold" textLength="38.4" lengthAdjust="spacingAndGlyphs" fill="#f2f2f2">FlattenNormal</text>
<circle cx="1296.25" cy="768.1" r="2.1" fill="#3d3d3d" stroke="#2a2a2a" stroke-width="0.6"/><path d="M1298.45 767.1L1299.65 768.1L1298.45 769.1Z" fill="#3d3d3d"/>
<text x="1303.25" y="770.65" font-family="Liberation Sans, sans-serif" font-size="5.9" textLength="28.1" lengthAdjust="spacingAndGlyphs" fill="#000" fill-opacity="0.8">Normal (V3)</text><text x="1302.9" y="770.2" font-family="Liberation Sans, sans-serif" font-size="5.9" textLength="28.1" lengthAdjust="spacingAndGlyphs" fill="#f2f2f2" stroke="#f2f2f2" stroke-width="0.22">Normal (V3)</text>
<text x="1333.75" y="770.65" font-family="Liberation Sans, sans-serif" font-size="5.9" textLength="15.4" lengthAdjust="spacingAndGlyphs" fill="#000" fill-opacity="0.8">Result</text><text x="1333.4" y="770.2" font-family="Liberation Sans, sans-serif" font-size="5.9" textLength="15.4" lengthAdjust="spacingAndGlyphs" fill="#f2f2f2" stroke="#f2f2f2" stroke-width="0.22">Result</text>
<circle cx="1353.4" cy="768.1" r="2.35" fill="#fff"/><path d="M1355.5 766.8L1357.1 768.1L1355.5 769.4Z" fill="#fff"/>
<circle cx="1296.25" cy="779.8" r="2.1" fill="#3d3d3d" stroke="#2a2a2a" stroke-width="0.6"/><path d="M1298.45 778.8L1299.65 779.8L1298.45 780.8Z" fill="#3d3d3d"/>
<text x="1303.25" y="782.35" font-family="Liberation Sans, sans-serif" font-size="5.9" textLength="28.8" lengthAdjust="spacingAndGlyphs" fill="#000" fill-opacity="0.8">Flatness (S)</text><text x="1302.9" y="781.9" font-family="Liberation Sans, sans-serif" font-size="5.9" textLength="28.8" lengthAdjust="spacingAndGlyphs" fill="#f2f2f2" stroke="#f2f2f2" stroke-width="0.22">Flatness (S)</text>
<rect x="1289.5" y="709.75" width="96" height="25.25" rx="3" fill="#000" fill-opacity="0.55" filter="url(#ish)"/><rect x="1290" y="709.25" width="95" height="23.75" rx="2.6" fill="#141514" stroke="#0b0b0b" stroke-width="0.8"/><path d="M1290.4 719.85V711.85Q1290.4 709.65 1292.6 709.65H1382.4Q1384.6 709.65 1384.6 711.85V719.85Z" fill="url(#iR)"/><path d="M1290.4 719.85V711.85Q1290.4 709.65 1292.6 709.65H1382.4Q1384.6 709.65 1384.6 711.85V719.85Z" fill="url(#igl)"/><text x="1295.55" y="717.6" font-family="Liberation Sans, sans-serif" font-size="6.3" font-weight="bold" textLength="74.5" lengthAdjust="spacingAndGlyphs" fill="#000" fill-opacity="0.8">Input Base Normal (Vector3)</text><text x="1295.2" y="717.15" font-family="Liberation Sans, sans-serif" font-size="6.3" font-weight="bold" textLength="74.5" lengthAdjust="spacingAndGlyphs" fill="#f2f2f2">Input Base Normal (Vector3)</text><path d="M1377.2 712.75H1382L1379.6 716.15Z" fill="#f0f0f0"/>
<circle cx="1296.25" cy="726.75" r="1.9" fill="#0c0c0c" stroke="#333" stroke-width="0.7"/>
<text x="1302.85" y="729.25" font-family="Liberation Sans, sans-serif" font-size="5.9" textLength="19.5" lengthAdjust="spacingAndGlyphs" fill="#000" fill-opacity="0.8">Preview</text><text x="1302.5" y="728.8" font-family="Liberation Sans, sans-serif" font-size="5.9" textLength="19.5" lengthAdjust="spacingAndGlyphs" fill="#f2f2f2" stroke="#f2f2f2" stroke-width="0.22">Preview</text>
<circle cx="1378" cy="726.75" r="2.35" fill="#fff"/><path d="M1380.1 725.45L1381.7 726.75L1380.1 728.05Z" fill="#fff"/>
<rect x="1403.25" y="751.8" width="101.5" height="36.45" rx="3" fill="#000" fill-opacity="0.55" filter="url(#ish)"/><rect x="1403.75" y="751.3" width="100.5" height="34.95" rx="2.6" fill="#141514" stroke="#0b0b0b" stroke-width="0.8"/><path d="M1404.15 761.9V753.9Q1404.15 751.7 1406.35 751.7H1501.65Q1503.85 751.7 1503.85 753.9V761.9Z" fill="url(#iS)"/><path d="M1404.15 761.9V753.9Q1404.15 751.7 1406.35 751.7H1501.65Q1503.85 751.7 1503.85 753.9V761.9Z" fill="url(#igl)"/><text x="1409.3" y="759.65" font-family="Liberation Sans, sans-serif" font-size="6.3" font-weight="bold" textLength="79.8" lengthAdjust="spacingAndGlyphs" fill="#000" fill-opacity="0.8">BlendAngleCorrectedNormals</text><text x="1408.95" y="759.2" font-family="Liberation Sans, sans-serif" font-size="6.3" font-weight="bold" textLength="79.8" lengthAdjust="spacingAndGlyphs" fill="#f2f2f2">BlendAngleCorrectedNormals</text>
<circle cx="1410" cy="768.2" r="2.35" fill="#fff"/><path d="M1412.1 766.9L1413.7 768.2L1412.1 769.5Z" fill="#fff"/>
<text x="1416.35" y="770.75" font-family="Liberation Sans, sans-serif" font-size="5.9" textLength="41" lengthAdjust="spacingAndGlyphs" fill="#000" fill-opacity="0.8">BaseNormal (V3)</text><text x="1416" y="770.3" font-family="Liberation Sans, sans-serif" font-size="5.9" textLength="41" lengthAdjust="spacingAndGlyphs" fill="#f2f2f2" stroke="#f2f2f2" stroke-width="0.22">BaseNormal (V3)</text>
<text x="1476.6" y="770.75" font-family="Liberation Sans, sans-serif" font-size="5.9" textLength="15.5" lengthAdjust="spacingAndGlyphs" fill="#000" fill-opacity="0.8">Result</text><text x="1476.25" y="770.3" font-family="Liberation Sans, sans-serif" font-size="5.9" textLength="15.5" lengthAdjust="spacingAndGlyphs" fill="#f2f2f2" stroke="#f2f2f2" stroke-width="0.22">Result</text>
<circle cx="1497" cy="768.2" r="2.35" fill="#fff"/><path d="M1499.1 766.9L1500.7 768.2L1499.1 769.5Z" fill="#fff"/>
<circle cx="1410" cy="780" r="2.35" fill="#fff"/><path d="M1412.1 778.7L1413.7 780L1412.1 781.3Z" fill="#fff"/>
<text x="1416.35" y="782.55" font-family="Liberation Sans, sans-serif" font-size="5.9" textLength="52" lengthAdjust="spacingAndGlyphs" fill="#000" fill-opacity="0.8">AdditionalNormal (V3)</text><text x="1416" y="782.1" font-family="Liberation Sans, sans-serif" font-size="5.9" textLength="52" lengthAdjust="spacingAndGlyphs" fill="#f2f2f2" stroke="#f2f2f2" stroke-width="0.22">AdditionalNormal (V3)</text>
<rect x="1517" y="751.8" width="77.25" height="37.2" rx="3" fill="#000" fill-opacity="0.55" filter="url(#ish)"/><rect x="1517.5" y="751.3" width="76.25" height="35.7" rx="2.6" fill="#141514" stroke="#0b0b0b" stroke-width="0.8"/><path d="M1517.9 761.9V753.9Q1517.9 751.7 1520.1 751.7H1591.15Q1593.35 751.7 1593.35 753.9V761.9Z" fill="url(#iG)"/><path d="M1517.9 761.9V753.9Q1517.9 751.7 1520.1 751.7H1591.15Q1593.35 751.7 1593.35 753.9V761.9Z" fill="url(#igl)"/><text x="1523.05" y="759.65" font-family="Liberation Sans, sans-serif" font-size="6.3" font-weight="bold" textLength="56.3" lengthAdjust="spacingAndGlyphs" fill="#000" fill-opacity="0.8">SetMaterialAttributes</text><text x="1522.7" y="759.2" font-family="Liberation Sans, sans-serif" font-size="6.3" font-weight="bold" textLength="56.3" lengthAdjust="spacingAndGlyphs" fill="#f2f2f2">SetMaterialAttributes</text><path d="M1585.95 754.8H1590.75L1588.35 758.2Z" fill="#f0f0f0"/>
<circle cx="1523.25" cy="769.25" r="1.9" fill="#101010" stroke="#f0f0f0" stroke-width="1.15"/><path d="M1525.55 768.05L1526.95 769.25L1525.55 770.45Z" fill="#f0f0f0"/>
<text x="1529.85" y="771.75" font-family="Liberation Sans, sans-serif" font-size="5.9" textLength="43" lengthAdjust="spacingAndGlyphs" fill="#000" fill-opacity="0.8">MaterialAttributes</text><text x="1529.5" y="771.3" font-family="Liberation Sans, sans-serif" font-size="5.9" textLength="43" lengthAdjust="spacingAndGlyphs" fill="#f2f2f2" stroke="#f2f2f2" stroke-width="0.22">MaterialAttributes</text>
<circle cx="1586.75" cy="769.25" r="2.35" fill="#fff"/><path d="M1588.85 767.95L1590.45 769.25L1588.85 770.55Z" fill="#fff"/>
<circle cx="1523.25" cy="780.75" r="2.35" fill="#fff"/><path d="M1525.35 779.45L1526.95 780.75L1525.35 782.05Z" fill="#fff"/>
<text x="1529.85" y="783.25" font-family="Liberation Sans, sans-serif" font-size="5.9" textLength="17.3" lengthAdjust="spacingAndGlyphs" fill="#000" fill-opacity="0.8">Normal</text><text x="1529.5" y="782.8" font-family="Liberation Sans, sans-serif" font-size="5.9" textLength="17.3" lengthAdjust="spacingAndGlyphs" fill="#f2f2f2" stroke="#f2f2f2" stroke-width="0.22">Normal</text>
<rect x="1630.25" y="751.8" width="57.75" height="40.2" rx="3" fill="#000" fill-opacity="0.55" filter="url(#ish)"/><rect x="1630.75" y="751.3" width="56.75" height="38.7" rx="2.6" fill="#141514" stroke="#0b0b0b" stroke-width="0.8"/><path d="M1631.15 777.5V753.9Q1631.15 751.7 1633.35 751.7H1684.9Q1687.1 751.7 1687.1 753.9V777.5Z" fill="url(#iO)"/><path d="M1631.15 777.5V753.9Q1631.15 751.7 1633.35 751.7H1684.9Q1687.1 751.7 1687.1 753.9V777.5Z" fill="url(#igl)"/><text x="1636.3" y="759.65" font-family="Liberation Sans, sans-serif" font-size="6.3" font-weight="bold" textLength="36.3" lengthAdjust="spacingAndGlyphs" fill="#000" fill-opacity="0.8">Output Result</text><text x="1635.95" y="759.2" font-family="Liberation Sans, sans-serif" font-size="6.3" font-weight="bold" textLength="36.3" lengthAdjust="spacingAndGlyphs" fill="#f2f2f2">Output Result</text>
<path d="M1679.35 761.7H1684.15L1681.75 765.1Z" fill="#f0f0f0"/>
<text x="1636.25" y="774.6" font-family="Liberation Sans, sans-serif" font-size="5.6" font-style="italic" textLength="26.8" lengthAdjust="spacingAndGlyphs" fill="#5c5cd6">Previewing</text>
<circle cx="1637" cy="784" r="2.35" fill="#fff"/><path d="M1639.1 782.7L1640.7 784L1639.1 785.3Z" fill="#fff"/>
<circle cx="1680.5" cy="784" r="1.9" fill="#101010" stroke="#f0f0f0" stroke-width="1.15"/><path d="M1682.8 782.8L1684.2 784L1682.8 785.2Z" fill="#f0f0f0"/>
</g>
<g opacity="0.999">
<text x="13.4" y="40.25" font-family="DejaVu Sans Condensed, DejaVu Sans, Liberation Sans, sans-serif" font-size="34.6" fill="#e6e6e6" textLength="389.5" lengthAdjust="spacingAndGlyphs">Limestone Master Material</text>
<text x="1909.1" y="955.9" text-anchor="end" font-family="DejaVu Sans Condensed, DejaVu Sans, Liberation Sans, sans-serif" font-size="25.9" fill="#d6d6d6" textLength="98" lengthAdjust="spacingAndGlyphs">THOMAS</text>
<text x="1903.4" y="985.2" text-anchor="end" font-family="DejaVu Sans Condensed, DejaVu Sans, Liberation Sans, sans-serif" font-weight="bold" font-size="24.8" fill="#d6d6d6" textLength="87.5" lengthAdjust="spacingAndGlyphs">BAUER</text>
</g>
</svg>
</body></html>
